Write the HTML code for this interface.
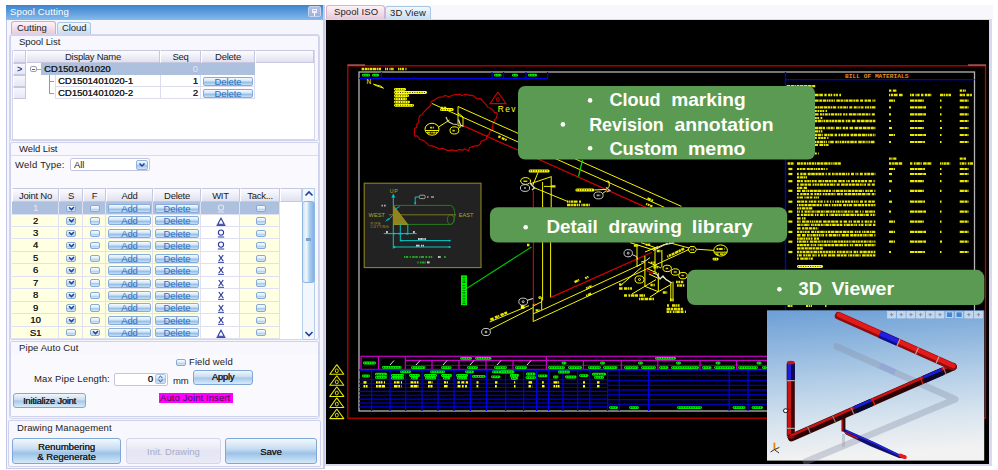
<!DOCTYPE html>
<html>
<head>
<meta charset="utf-8">
<title>Spool Cutting</title>
<style>
html,body{margin:0;padding:0;background:#fff;}
body{width:998px;height:470px;position:relative;overflow:hidden;font-family:"Liberation Sans",sans-serif;font-size:9.5px;color:#222;}
.a{position:absolute;box-sizing:border-box;}
.t{position:absolute;white-space:nowrap;line-height:12px;letter-spacing:-0.05px;}
.grp{background:#f7f7fd;border:1px solid #cfd2ec;border-radius:2px;}
.hdr{background:linear-gradient(#fcfcfe,#eeeef8 50%,#e0e1f0);border:1px solid #c6c8e0;border-left-color:#fff;}
.hc{text-align:center;line-height:12px;white-space:nowrap;letter-spacing:-0.25px;}
.btn{border:1px solid #7fa8d8;border-radius:3px;background:linear-gradient(#f2f7fd,#c4dbf0 48%,#a3c7e8 52%,#d9eaf8);text-align:center;}
.sb{border:1px solid #86acd9;border-radius:2px;background:linear-gradient(#f6fafe,#d2e4f5 45%,#8fbce6 58%,#c8dff5);color:#2d6fc0;font-size:9.5px;line-height:8px;text-align:center;letter-spacing:-0.1px;overflow:hidden;}
.cb{width:9px;height:8px;border:1px solid #86aad6;border-radius:2px;background:linear-gradient(#fafdff,#d8e8f7 50%,#a6c8ea 55%,#d8e9f8);}
.yl{background:#ffffe1;}
.wh{background:#fff;}
.sel{background:#adc1de;}
</style>
</head>
<body>
<!-- LEFT PANEL -->
<div class="a " style="left:6px;top:5px;width:319.2px;height:463.5px;background:#f5f5fb;border:1px solid #c6caea;border-left:1.5px solid #c2c7ea;border-right:2px solid #c8cce9;border-top:none;"></div>
<div class="a " style="left:6px;top:5px;width:317.4px;height:14.6px;background:linear-gradient(#3a84ce,#5b9cdb 45%,#86baeb);"></div>
<div class="t " style="left:10px;top:6px;color:#fff;letter-spacing:0.15px;">Spool Cutting</div>
<div class="a " style="left:308.4px;top:6.4px;width:12.4px;height:11px;border:1px solid #c9d4ee;background:linear-gradient(#b0c1e8,#9db1df);border-radius:1.5px;"></div>
<div class="a " style="left:312px;top:8.6px;width:5px;height:4.4px;border:1px solid #eef2fa;border-bottom-width:2px;"></div>
<div class="a " style="left:314px;top:13px;width:1px;height:3px;background:#fff;"></div>
<div class="a " style="left:11px;top:21px;width:45px;height:14px;border:1px solid #d4aac6;border-bottom:none;border-radius:3px 3px 0 0;background:linear-gradient(#fcf3f8,#e6c8dc);"></div>
<div class="t " style="left:17px;top:22px;">Cutting</div>
<div class="a " style="left:57px;top:22px;width:34px;height:12px;border:1px solid #a9c6e4;border-bottom:none;border-radius:3px 3px 0 0;background:linear-gradient(#f2f8fd,#c6ddf2);"></div>
<div class="t " style="left:62px;top:22px;">Cloud</div>
<div class="a " style="left:8.5px;top:33.5px;width:311px;height:385px;border:1.5px solid #d3d6ec;border-radius:3px;background:#f4f4fb;"></div>
<div class="a grp" style="left:10px;top:35px;width:309px;height:106px;"></div>
<div class="t " style="left:19px;top:36px;">Spool List</div>
<div class="a wh" style="left:12px;top:50px;width:303px;height:90px;border:1px solid #d4d6ec;"></div>
<div class="a hdr" style="left:13px;top:50px;width:13px;height:13px;"></div>
<div class="a hdr" style="left:26px;top:50px;width:134px;height:13px;"><div class="hc">Display Name</div></div>
<div class="a hdr" style="left:160px;top:50px;width:41px;height:13px;"><div class="hc">Seq</div></div>
<div class="a hdr" style="left:201px;top:50px;width:54px;height:13px;"><div class="hc">Delete</div></div>
<div class="a hdr" style="left:255px;top:50px;width:59px;height:13px;"></div>
<div class="a hdr" style="left:13px;top:63px;width:13px;height:12px;background:linear-gradient(#f6f6fc,#e6e7f4);"></div>
<div class="a hdr" style="left:13px;top:75px;width:13px;height:12px;background:linear-gradient(#f6f6fc,#e6e7f4);"></div>
<div class="a hdr" style="left:13px;top:87px;width:13px;height:12px;background:linear-gradient(#f6f6fc,#e6e7f4);"></div>
<div class="t " style="left:17px;top:63px;color:#2a3f8f;font-weight:bold;font-size:9px;">&gt;</div>
<div class="a sel" style="left:41px;top:63px;width:214px;height:12px;"></div>
<div class="a " style="left:30px;top:66px;width:7px;height:6px;border:1px solid #9a9cb8;border-radius:2px;background:#fff;"></div>
<div class="a " style="left:32px;top:68.5px;width:3px;height:1px;background:#666;"></div>
<div class="a " style="left:37px;top:69px;width:4px;height:1px;background:#aaa;"></div>
<div class="t " style="left:44px;top:63px;text-shadow:0.25px 0 0 #222;letter-spacing:0;">CD1501401020</div>
<div class="t " style="left:160px;top:63px;width:38px;text-align:right;color:#dfe6f3;">0</div>
<div class="a wh" style="left:55px;top:75px;width:200px;height:12px;border:1px solid #dcdcf0;border-top:none;"></div>
<div class="a " style="left:160px;top:75px;width:1px;height:12px;background:#dcdcf0;"></div>
<div class="a " style="left:200px;top:75px;width:1px;height:12px;background:#dcdcf0;"></div>
<div class="t " style="left:58px;top:75px;text-shadow:0.25px 0 0 #222;letter-spacing:0;">CD1501401020-1</div>
<div class="t " style="left:160px;top:75px;width:38px;text-align:right;text-shadow:0.25px 0 0 #222;">1</div>
<div class="a sb" style="left:203px;top:77px;width:50px;height:9px;">Delete</div>
<div class="a " style="left:50px;top:81px;width:4px;height:1px;background:#999;"></div>
<div class="a wh" style="left:55px;top:87px;width:200px;height:12px;border:1px solid #dcdcf0;border-top:none;"></div>
<div class="a " style="left:160px;top:87px;width:1px;height:12px;background:#dcdcf0;"></div>
<div class="a " style="left:200px;top:87px;width:1px;height:12px;background:#dcdcf0;"></div>
<div class="t " style="left:58px;top:87px;text-shadow:0.25px 0 0 #222;letter-spacing:0;">CD1501401020-2</div>
<div class="t " style="left:160px;top:87px;width:38px;text-align:right;text-shadow:0.25px 0 0 #222;">2</div>
<div class="a sb" style="left:203px;top:89px;width:50px;height:9px;">Delete</div>
<div class="a " style="left:50px;top:93px;width:4px;height:1px;background:#999;"></div>
<div class="a " style="left:49px;top:75px;width:1px;height:19px;background:#999;"></div>
<div class="a grp" style="left:10px;top:142px;width:309px;height:198px;"></div>
<div class="t " style="left:19px;top:143px;">Weld List</div>
<div class="a " style="left:11px;top:155px;width:307px;height:33px;background:#f9f9fe;border-top:1px solid #d9dbf0;"></div>
<div class="t " style="left:15px;top:159px;letter-spacing:0.25px;">Weld Type:</div>
<div class="a wh" style="left:70px;top:158px;width:80px;height:13px;border:1px solid #c3c6e2;border-radius:2px;"></div>
<div class="t " style="left:74px;top:159px;">All</div>
<div class="a " style="left:136px;top:160px;width:12px;height:10px;border:1px solid #8db3de;border-radius:2px;background:linear-gradient(#f4f9fe,#cfe2f4 45%,#9cc3e8 55%,#d4e6f7);"></div>
<svg class="a" style="left:138px;top:162px;" width="8" height="6"><path d="M1.5 1.5 L4 4 L6.5 1.5" stroke="#1f3f9a" stroke-width="1.5" fill="none"/></svg>
<div class="a wh" style="left:12px;top:188px;width:303px;height:152px;border:1px solid #d4d6ec;"></div>
<div class="a hdr" style="left:12px;top:188px;width:47px;height:14px;"><div class="hc" style="line-height:13px;">Joint No</div></div>
<div class="a hdr" style="left:59px;top:188px;width:24px;height:14px;"><div class="hc" style="line-height:13px;">S</div></div>
<div class="a hdr" style="left:83px;top:188px;width:23px;height:14px;"><div class="hc" style="line-height:13px;">F</div></div>
<div class="a hdr" style="left:106px;top:188px;width:47px;height:14px;"><div class="hc" style="line-height:13px;">Add</div></div>
<div class="a hdr" style="left:153px;top:188px;width:48px;height:14px;"><div class="hc" style="line-height:13px;">Delete</div></div>
<div class="a hdr" style="left:201px;top:188px;width:39px;height:14px;"><div class="hc" style="line-height:13px;">WIT</div></div>
<div class="a hdr" style="left:240px;top:188px;width:40px;height:14px;"><div class="hc" style="line-height:13px;">Tack...</div></div>
<div class="a hdr" style="left:280px;top:188px;width:22px;height:14px;"></div>
<div class="a sel" style="left:12px;top:202.2px;width:268px;height:12.43px;"></div>
<div class="a " style="left:12px;top:213.63px;width:268px;height:1px;background:#dfe0f2;"></div>
<div class="t " style="left:12px;top:202.2px;width:47px;text-align:center;color:#e6ecf6;">1</div>
<div class="a cb" style="left:66px;top:204.8px;width:10px;height:7.4px;width:10px;height:7.4px;"></div>
<svg class="a" style="left:67.5px;top:205.8px;" width="7" height="6"><path d="M1 1.2 L3.5 3.6 L6 1" stroke="#1f3f9a" stroke-width="1.5" fill="none"/></svg>
<div class="a cb" style="left:90px;top:204.8px;width:10px;height:7.4px;width:10px;height:7.4px;"></div>
<div class="a cb" style="left:256px;top:204.8px;width:10px;height:7.4px;width:10px;height:7.4px;"></div>
<div class="a sb" style="left:108px;top:204.0px;width:43px;height:9px;">Add</div>
<div class="a sb" style="left:155px;top:204.0px;width:44px;height:9px;">Delete</div>
<svg class="a" style="left:215.5px;top:203.2px;" width="10" height="11"><circle cx="5" cy="4.6" r="2.6" stroke="#dfe7f5" stroke-width="1.1" fill="none"/><path d="M1.8 9 H8.2" stroke="#dfe7f5" stroke-width="1"/></svg>
<div class="a yl" style="left:12px;top:214.63px;width:189px;height:12.43px;"></div>
<div class="a yl" style="left:240px;top:214.63px;width:40px;height:12.43px;"></div>
<div class="a " style="left:12px;top:226.06px;width:268px;height:1px;background:#dfe0f2;"></div>
<div class="t " style="left:12px;top:214.63px;width:47px;text-align:center;text-shadow:0.2px 0 0 #222;">2</div>
<div class="a cb" style="left:66px;top:217.23px;width:10px;height:7.4px;width:10px;height:7.4px;"></div>
<svg class="a" style="left:67.5px;top:218.23px;" width="7" height="6"><path d="M1 1.2 L3.5 3.6 L6 1" stroke="#1f3f9a" stroke-width="1.5" fill="none"/></svg>
<div class="a cb" style="left:90px;top:217.23px;width:10px;height:7.4px;width:10px;height:7.4px;"></div>
<div class="a cb" style="left:256px;top:217.23px;width:10px;height:7.4px;width:10px;height:7.4px;"></div>
<div class="a sb" style="left:108px;top:216.43px;width:43px;height:9px;">Add</div>
<div class="a sb" style="left:155px;top:216.43px;width:44px;height:9px;">Delete</div>
<svg class="a" style="left:214.5px;top:215.63px;" width="12" height="11"><path d="M6 2.2 L9.2 8.3 H2.8 Z" stroke="#2a3aa0" stroke-width="1.1" fill="none"/><path d="M1.5 9.3 H10.5" stroke="#2a3aa0" stroke-width="1.2"/></svg>
<div class="a yl" style="left:12px;top:227.06px;width:189px;height:12.43px;"></div>
<div class="a yl" style="left:240px;top:227.06px;width:40px;height:12.43px;"></div>
<div class="a " style="left:12px;top:238.49px;width:268px;height:1px;background:#dfe0f2;"></div>
<div class="t " style="left:12px;top:227.06px;width:47px;text-align:center;text-shadow:0.2px 0 0 #222;">3</div>
<div class="a cb" style="left:66px;top:229.66px;width:10px;height:7.4px;width:10px;height:7.4px;"></div>
<svg class="a" style="left:67.5px;top:230.66px;" width="7" height="6"><path d="M1 1.2 L3.5 3.6 L6 1" stroke="#1f3f9a" stroke-width="1.5" fill="none"/></svg>
<div class="a cb" style="left:90px;top:229.66px;width:10px;height:7.4px;width:10px;height:7.4px;"></div>
<div class="a cb" style="left:256px;top:229.66px;width:10px;height:7.4px;width:10px;height:7.4px;"></div>
<div class="a sb" style="left:108px;top:228.86px;width:43px;height:9px;">Add</div>
<div class="a sb" style="left:155px;top:228.86px;width:44px;height:9px;">Delete</div>
<svg class="a" style="left:215.5px;top:228.06px;" width="10" height="11"><circle cx="5" cy="4.6" r="2.6" stroke="#2a3aa0" stroke-width="1.1" fill="none"/><path d="M1.8 9 H8.2" stroke="#2a3aa0" stroke-width="1"/></svg>
<div class="a yl" style="left:12px;top:239.49px;width:189px;height:12.43px;"></div>
<div class="a yl" style="left:240px;top:239.49px;width:40px;height:12.43px;"></div>
<div class="a " style="left:12px;top:250.92px;width:268px;height:1px;background:#dfe0f2;"></div>
<div class="t " style="left:12px;top:239.49px;width:47px;text-align:center;text-shadow:0.2px 0 0 #222;">4</div>
<div class="a cb" style="left:66px;top:242.09px;width:10px;height:7.4px;width:10px;height:7.4px;"></div>
<svg class="a" style="left:67.5px;top:243.09px;" width="7" height="6"><path d="M1 1.2 L3.5 3.6 L6 1" stroke="#1f3f9a" stroke-width="1.5" fill="none"/></svg>
<div class="a cb" style="left:90px;top:242.09px;width:10px;height:7.4px;width:10px;height:7.4px;"></div>
<div class="a cb" style="left:256px;top:242.09px;width:10px;height:7.4px;width:10px;height:7.4px;"></div>
<div class="a sb" style="left:108px;top:241.29px;width:43px;height:9px;">Add</div>
<div class="a sb" style="left:155px;top:241.29px;width:44px;height:9px;">Delete</div>
<svg class="a" style="left:215.5px;top:240.49px;" width="10" height="11"><circle cx="5" cy="4.6" r="2.6" stroke="#2a3aa0" stroke-width="1.1" fill="none"/><path d="M1.8 9 H8.2" stroke="#2a3aa0" stroke-width="1"/></svg>
<div class="a yl" style="left:12px;top:251.92px;width:189px;height:12.43px;"></div>
<div class="a yl" style="left:240px;top:251.92px;width:40px;height:12.43px;"></div>
<div class="a " style="left:12px;top:263.35px;width:268px;height:1px;background:#dfe0f2;"></div>
<div class="t " style="left:12px;top:251.92px;width:47px;text-align:center;text-shadow:0.2px 0 0 #222;">5</div>
<div class="a cb" style="left:66px;top:254.52px;width:10px;height:7.4px;width:10px;height:7.4px;"></div>
<svg class="a" style="left:67.5px;top:255.52px;" width="7" height="6"><path d="M1 1.2 L3.5 3.6 L6 1" stroke="#1f3f9a" stroke-width="1.5" fill="none"/></svg>
<div class="a cb" style="left:90px;top:254.52px;width:10px;height:7.4px;width:10px;height:7.4px;"></div>
<div class="a cb" style="left:256px;top:254.52px;width:10px;height:7.4px;width:10px;height:7.4px;"></div>
<div class="a sb" style="left:108px;top:253.72px;width:43px;height:9px;">Add</div>
<div class="a sb" style="left:155px;top:253.72px;width:44px;height:9px;">Delete</div>
<svg class="a" style="left:215.5px;top:252.92px;" width="10" height="11"><path d="M2.8 2 L7.2 8 M7.2 2 L2.8 8" stroke="#2a3aa0" stroke-width="1.2" fill="none"/><path d="M2 9.3 H8" stroke="#2a3aa0" stroke-width="1"/></svg>
<div class="a yl" style="left:12px;top:264.35px;width:189px;height:12.43px;"></div>
<div class="a yl" style="left:240px;top:264.35px;width:40px;height:12.43px;"></div>
<div class="a " style="left:12px;top:275.78px;width:268px;height:1px;background:#dfe0f2;"></div>
<div class="t " style="left:12px;top:264.35px;width:47px;text-align:center;text-shadow:0.2px 0 0 #222;">6</div>
<div class="a cb" style="left:66px;top:266.95px;width:10px;height:7.4px;width:10px;height:7.4px;"></div>
<svg class="a" style="left:67.5px;top:267.95px;" width="7" height="6"><path d="M1 1.2 L3.5 3.6 L6 1" stroke="#1f3f9a" stroke-width="1.5" fill="none"/></svg>
<div class="a cb" style="left:90px;top:266.95px;width:10px;height:7.4px;width:10px;height:7.4px;"></div>
<div class="a cb" style="left:256px;top:266.95px;width:10px;height:7.4px;width:10px;height:7.4px;"></div>
<div class="a sb" style="left:108px;top:266.15px;width:43px;height:9px;">Add</div>
<div class="a sb" style="left:155px;top:266.15px;width:44px;height:9px;">Delete</div>
<svg class="a" style="left:215.5px;top:265.35px;" width="10" height="11"><path d="M2.8 2 L7.2 8 M7.2 2 L2.8 8" stroke="#2a3aa0" stroke-width="1.2" fill="none"/><path d="M2 9.3 H8" stroke="#2a3aa0" stroke-width="1"/></svg>
<div class="a yl" style="left:12px;top:276.78px;width:189px;height:12.43px;"></div>
<div class="a yl" style="left:240px;top:276.78px;width:40px;height:12.43px;"></div>
<div class="a " style="left:12px;top:288.21px;width:268px;height:1px;background:#dfe0f2;"></div>
<div class="t " style="left:12px;top:276.78px;width:47px;text-align:center;text-shadow:0.2px 0 0 #222;">7</div>
<div class="a cb" style="left:66px;top:279.38px;width:10px;height:7.4px;width:10px;height:7.4px;"></div>
<svg class="a" style="left:67.5px;top:280.38px;" width="7" height="6"><path d="M1 1.2 L3.5 3.6 L6 1" stroke="#1f3f9a" stroke-width="1.5" fill="none"/></svg>
<div class="a cb" style="left:90px;top:279.38px;width:10px;height:7.4px;width:10px;height:7.4px;"></div>
<div class="a cb" style="left:256px;top:279.38px;width:10px;height:7.4px;width:10px;height:7.4px;"></div>
<div class="a sb" style="left:108px;top:278.58px;width:43px;height:9px;">Add</div>
<div class="a sb" style="left:155px;top:278.58px;width:44px;height:9px;">Delete</div>
<svg class="a" style="left:215.5px;top:277.78px;" width="10" height="11"><path d="M2.8 2 L7.2 8 M7.2 2 L2.8 8" stroke="#2a3aa0" stroke-width="1.2" fill="none"/><path d="M2 9.3 H8" stroke="#2a3aa0" stroke-width="1"/></svg>
<div class="a yl" style="left:12px;top:289.21px;width:189px;height:12.43px;"></div>
<div class="a yl" style="left:240px;top:289.21px;width:40px;height:12.43px;"></div>
<div class="a " style="left:12px;top:300.64px;width:268px;height:1px;background:#dfe0f2;"></div>
<div class="t " style="left:12px;top:289.21px;width:47px;text-align:center;text-shadow:0.2px 0 0 #222;">8</div>
<div class="a cb" style="left:66px;top:291.81px;width:10px;height:7.4px;width:10px;height:7.4px;"></div>
<svg class="a" style="left:67.5px;top:292.81px;" width="7" height="6"><path d="M1 1.2 L3.5 3.6 L6 1" stroke="#1f3f9a" stroke-width="1.5" fill="none"/></svg>
<div class="a cb" style="left:90px;top:291.81px;width:10px;height:7.4px;width:10px;height:7.4px;"></div>
<div class="a cb" style="left:256px;top:291.81px;width:10px;height:7.4px;width:10px;height:7.4px;"></div>
<div class="a sb" style="left:108px;top:291.01px;width:43px;height:9px;">Add</div>
<div class="a sb" style="left:155px;top:291.01px;width:44px;height:9px;">Delete</div>
<svg class="a" style="left:215.5px;top:290.21px;" width="10" height="11"><path d="M2.8 2 L7.2 8 M7.2 2 L2.8 8" stroke="#2a3aa0" stroke-width="1.2" fill="none"/><path d="M2 9.3 H8" stroke="#2a3aa0" stroke-width="1"/></svg>
<div class="a yl" style="left:12px;top:301.64px;width:189px;height:12.43px;"></div>
<div class="a yl" style="left:240px;top:301.64px;width:40px;height:12.43px;"></div>
<div class="a " style="left:12px;top:313.07px;width:268px;height:1px;background:#dfe0f2;"></div>
<div class="t " style="left:12px;top:301.64px;width:47px;text-align:center;text-shadow:0.2px 0 0 #222;">9</div>
<div class="a cb" style="left:66px;top:304.24px;width:10px;height:7.4px;width:10px;height:7.4px;"></div>
<svg class="a" style="left:67.5px;top:305.24px;" width="7" height="6"><path d="M1 1.2 L3.5 3.6 L6 1" stroke="#1f3f9a" stroke-width="1.5" fill="none"/></svg>
<div class="a cb" style="left:90px;top:304.24px;width:10px;height:7.4px;width:10px;height:7.4px;"></div>
<div class="a cb" style="left:256px;top:304.24px;width:10px;height:7.4px;width:10px;height:7.4px;"></div>
<div class="a sb" style="left:108px;top:303.44px;width:43px;height:9px;">Add</div>
<div class="a sb" style="left:155px;top:303.44px;width:44px;height:9px;">Delete</div>
<svg class="a" style="left:215.5px;top:302.64px;" width="10" height="11"><path d="M2.8 2 L7.2 8 M7.2 2 L2.8 8" stroke="#2a3aa0" stroke-width="1.2" fill="none"/><path d="M2 9.3 H8" stroke="#2a3aa0" stroke-width="1"/></svg>
<div class="a yl" style="left:12px;top:314.07px;width:189px;height:12.43px;"></div>
<div class="a yl" style="left:240px;top:314.07px;width:40px;height:12.43px;"></div>
<div class="a " style="left:12px;top:325.5px;width:268px;height:1px;background:#dfe0f2;"></div>
<div class="t " style="left:12px;top:314.07px;width:47px;text-align:center;text-shadow:0.2px 0 0 #222;">10</div>
<div class="a cb" style="left:66px;top:316.67px;width:10px;height:7.4px;width:10px;height:7.4px;"></div>
<svg class="a" style="left:67.5px;top:317.67px;" width="7" height="6"><path d="M1 1.2 L3.5 3.6 L6 1" stroke="#1f3f9a" stroke-width="1.5" fill="none"/></svg>
<div class="a cb" style="left:90px;top:316.67px;width:10px;height:7.4px;width:10px;height:7.4px;"></div>
<div class="a cb" style="left:256px;top:316.67px;width:10px;height:7.4px;width:10px;height:7.4px;"></div>
<div class="a sb" style="left:108px;top:315.87px;width:43px;height:9px;">Add</div>
<div class="a sb" style="left:155px;top:315.87px;width:44px;height:9px;">Delete</div>
<svg class="a" style="left:215.5px;top:315.07px;" width="10" height="11"><path d="M2.8 2 L7.2 8 M7.2 2 L2.8 8" stroke="#2a3aa0" stroke-width="1.2" fill="none"/><path d="M2 9.3 H8" stroke="#2a3aa0" stroke-width="1"/></svg>
<div class="a yl" style="left:12px;top:326.5px;width:189px;height:12.43px;"></div>
<div class="a yl" style="left:240px;top:326.5px;width:40px;height:12.43px;"></div>
<div class="a " style="left:12px;top:337.93px;width:268px;height:1px;background:#dfe0f2;"></div>
<div class="t " style="left:12px;top:326.5px;width:47px;text-align:center;text-shadow:0.2px 0 0 #222;">S1</div>
<div class="a cb" style="left:66px;top:329.1px;width:10px;height:7.4px;width:10px;height:7.4px;"></div>
<div class="a cb" style="left:90px;top:329.1px;width:10px;height:7.4px;width:10px;height:7.4px;"></div>
<svg class="a" style="left:91.5px;top:330.1px;" width="7" height="6"><path d="M1 1.2 L3.5 3.6 L6 1" stroke="#1f3f9a" stroke-width="1.5" fill="none"/></svg>
<div class="a cb" style="left:256px;top:329.1px;width:10px;height:7.4px;width:10px;height:7.4px;"></div>
<div class="a sb" style="left:108px;top:328.3px;width:43px;height:9px;">Add</div>
<div class="a sb" style="left:155px;top:328.3px;width:44px;height:9px;">Delete</div>
<svg class="a" style="left:214.5px;top:327.5px;" width="12" height="11"><path d="M6 2.2 L9.2 8.3 H2.8 Z" stroke="#2a3aa0" stroke-width="1.1" fill="none"/><path d="M1.5 9.3 H10.5" stroke="#2a3aa0" stroke-width="1.2"/></svg>
<div class="a " style="left:58px;top:202px;width:1px;height:137px;background:#dfe0f2;"></div>
<div class="a " style="left:82px;top:202px;width:1px;height:137px;background:#dfe0f2;"></div>
<div class="a " style="left:105px;top:202px;width:1px;height:137px;background:#dfe0f2;"></div>
<div class="a " style="left:152px;top:202px;width:1px;height:137px;background:#dfe0f2;"></div>
<div class="a " style="left:200px;top:202px;width:1px;height:137px;background:#dfe0f2;"></div>
<div class="a " style="left:239px;top:202px;width:1px;height:137px;background:#dfe0f2;"></div>
<div class="a " style="left:279px;top:202px;width:1px;height:137px;background:#dfe0f2;"></div>
<div class="a " style="left:302px;top:188px;width:13px;height:152px;background:#f2f7fd;border:1px solid #b5cfea;border-radius:2px;"></div>
<div class="a " style="left:302px;top:201px;width:13px;height:82px;border:1px solid #8db6e2;border-radius:3px;background:linear-gradient(90deg,#cfe3f6,#f2f8fe 30%,#a9cdee 60%,#7fb2e4);"></div>
<div class="a " style="left:306px;top:238px;width:5px;height:3px;background:#7c9fd0;"></div>
<svg class="a" style="left:304px;top:190px;" width="10" height="8"><path d="M1.5 5.5 L5 2 L8.5 5.5" stroke="#1f3f9a" stroke-width="1.6" fill="none"/></svg>
<svg class="a" style="left:304px;top:330px;" width="10" height="8"><path d="M1.5 2 L5 5.5 L8.5 2" stroke="#1f3f9a" stroke-width="1.6" fill="none"/></svg>
<div class="a grp" style="left:10px;top:341px;width:309px;height:76px;"></div>
<div class="t " style="left:19px;top:342px;letter-spacing:0.1px;">Pipe Auto Cut</div>
<div class="a " style="left:11px;top:354px;width:307px;height:62px;background:#f9f9fe;"></div>
<div class="a cb" style="left:176px;top:359px;width:10px;height:7.4px;width:10px;height:7.4px;"></div>
<div class="t " style="left:189px;top:356px;letter-spacing:0.1px;">Field weld</div>
<div class="t " style="left:34px;top:373px;letter-spacing:0.12px;">Max Pipe Length:</div>
<div class="a wh" style="left:114px;top:372.5px;width:54px;height:13px;border:1px solid #c3c6e2;border-radius:2px;"></div>
<div class="t " style="left:114px;top:373px;width:39px;text-align:right;text-shadow:0.35px 0 0 #222;">0</div>
<div class="a " style="left:155px;top:374px;width:11px;height:10px;border:1px solid #a9c5e6;border-radius:2px;background:linear-gradient(#f4f9fe,#cfe2f4 45%,#a9cbec 55%,#d4e6f7);"></div>
<svg class="a" style="left:157px;top:375px;" width="7" height="8"><path d="M1.5 3 L3.5 1.2 L5.5 3 M1.5 5 L3.5 6.8 L5.5 5" stroke="#1f3f9a" stroke-width="1" fill="none"/></svg>
<div class="t " style="left:173px;top:375px;">mm</div>
<div class="a btn" style="left:193px;top:370px;width:60px;height:15px;"><div class="hc" style="line-height:12px;text-shadow:0.2px 0 0 #222;">Apply</div></div>
<div class="a btn" style="left:13px;top:393px;width:73px;height:15px;"><div class="hc" style="line-height:13px;text-shadow:0.2px 0 0 #222;">Initialize Joint</div></div>
<div class="a " style="left:159px;top:393px;width:74px;height:9.5px;background:#ff00ff;"></div>
<div class="t " style="left:160px;top:391.5px;color:#3c0840;letter-spacing:0.1px;">Auto Joint Insert</div>
<div class="a " style="left:8px;top:420px;width:313px;height:47px;border:1px solid #cfd2ec;background:#f7f7fd;border-radius:2px;"></div>
<div class="t " style="left:17px;top:421.5px;letter-spacing:0.1px;">Drawing Management</div>
<div class="a " style="left:12px;top:438px;width:109px;height:26px;border:1px solid #7fa8d8;border-radius:3px;background:linear-gradient(#f2f8fd,#c9def2 40%,#9cc3e8 60%,#d5e8f8);text-align:center;"><div style="line-height:10px;padding-top:2.5px;text-shadow:0.2px 0 0 #222;">Renumbering<br>&amp; Regenerate</div></div>
<div class="a " style="left:126px;top:438px;width:95px;height:26px;border:1px solid #d3d6ea;border-radius:3px;background:linear-gradient(#f7f7fc,#e4e6f3 50%,#e9eaf6);text-align:center;"><div style="line-height:25px;color:#a6acc8;">Init. Drawing</div></div>
<div class="a " style="left:225px;top:438px;width:92px;height:26px;border:1px solid #7fa8d8;border-radius:3px;background:linear-gradient(#f2f8fd,#c9def2 40%,#9cc3e8 60%,#d5e8f8);text-align:center;"><div style="line-height:25px;text-shadow:0.2px 0 0 #222;">Save</div></div>
<div class="a" style="left:326px;top:5px;width:667px;height:15px;background:#f8f8fc;"></div>
<div class="a" style="left:326px;top:5px;width:59px;height:15px;border:1px solid #d8b4cc;border-bottom:none;border-radius:3px 3px 0 0;background:linear-gradient(#fcf3f8,#e4c6da);"></div>
<div class="t" style="left:334px;top:6px;letter-spacing:0.1px;">Spool ISO</div>
<div class="a" style="left:385px;top:6px;width:46px;height:13px;border:1px solid #a9c6e4;border-bottom:none;border-radius:3px 3px 0 0;background:linear-gradient(#f2f8fd,#c9dff3);"></div>
<div class="t" style="left:390px;top:6.5px;letter-spacing:0.1px;">3D View</div>
<div class="a" style="left:325px;top:19px;width:667px;height:447px;background:#d9daf0;"></div>
<div class="a" style="left:326px;top:19.5px;width:663px;height:444.5px;background:#000;"></div>
<svg class="a" style="left:326px;top:19px;" width="663" height="445" viewBox="326 19 663 445" fill="none">
<rect x="347.8" y="65.8" width="637.7" height="352.4" stroke="#c40000" stroke-width="1.3"/>
<path d="M347.5 65L365 65" stroke="#e08080" stroke-width="1" />
<path d="M968 65L986 65" stroke="#e08080" stroke-width="1" />
<rect x="359" y="72" width="615.5" height="339" stroke="#b4b4b4" stroke-width="1.3"/>
<path d="M359 78.4L548 78.4" stroke="#0000e6" stroke-width="1.2" />
<path d="M381.4 72L381.4 78.4" stroke="#0000e6" stroke-width="1.2" />
<path d="M492 72L492 78.4" stroke="#0000e6" stroke-width="1.2" />
<path d="M503.6 72L503.6 78.4" stroke="#0000e6" stroke-width="1.2" />
<path d="M526 72L526 78.4" stroke="#0000e6" stroke-width="1.2" />
<path d="M547.6 72L547.6 78.4" stroke="#0000e6" stroke-width="1.2" />
<path d="M363.4 75.2H368.6" stroke="#00f000" stroke-width="2.8" stroke-linecap="round"/><path d="M363.2 75.2H369" stroke="#003000" stroke-width="1.1" stroke-dasharray="0.9 1.5"/>
<path d="M373.4 75.2H377.6" stroke="#00f000" stroke-width="2.8" stroke-linecap="round"/><path d="M373.2 75.2H378" stroke="#003000" stroke-width="1.1" stroke-dasharray="0.9 1.5"/>
<path d="M495.4 75.2H500.1" stroke="#00f000" stroke-width="2.8" stroke-linecap="round"/><path d="M495.2 75.2H500.5" stroke="#003000" stroke-width="1.1" stroke-dasharray="0.9 1.5"/>
<path d="M513.4 75.2H516.6" stroke="#00f000" stroke-width="2.8" stroke-linecap="round"/><path d="M513.2 75.2H517" stroke="#003000" stroke-width="1.1" stroke-dasharray="0.9 1.5"/>
<path d="M529.4 75.2H535.6" stroke="#00f000" stroke-width="2.8" stroke-linecap="round"/><path d="M529.2 75.2H536" stroke="#003000" stroke-width="1.1" stroke-dasharray="0.9 1.5"/>
<path d="M361.6 69H381" stroke="#ffff00" stroke-width="2.4" stroke-dasharray="2.4 0.6 3.0 0.5 1.2 0.5 2.4 0.5 3.6 0.6 1.2 0.5 3.0 1.4" opacity="0.9"/>
<path d="M385 69H394" stroke="#ffff00" stroke-width="2.4" stroke-dasharray="1.2 0.6 1.2 1.4 1.2 0.5 1.8 0.5 3.6 1.4" opacity="0.9"/>
<path d="M398 69H406.5" stroke="#ffff00" stroke-width="2.4" stroke-dasharray="1.2 0.6 1.2 0.6 2.4 1.4 1.8 0.5" opacity="0.9"/>
<path d="M785.5 72L785.5 310" stroke="#0000e6" stroke-width="1.3" />
<path d="M785.5 79.6L974.5 79.6" stroke="#0000e6" stroke-width="1.3" />
<text x="845" y="78" font-family="Liberation Mono,monospace" font-size="5.6" fill="#e88a18" textLength="63.5" lengthAdjust="spacingAndGlyphs" font-weight="bold">BILL OF MATERIALS</text>
<path d="M786.6 86.2H816" stroke="#ffff00" stroke-width="2.2" stroke-dasharray="3.6 0.7 3.6 0.6 1.2 0.6 2.4 0.5 3.6 0.5 3.6 0.5 3.6 0.6 3.0 1.4" opacity="0.9"/>
<path d="M889 90.6H897" stroke="#ffff00" stroke-width="2.2" stroke-dasharray="2.4 1.4 3.6 1.4" opacity="0.9"/>
<path d="M959.7 90.6H966" stroke="#ffff00" stroke-width="2.2" stroke-dasharray="2.4 0.7 1.8 0.6 1.8 0.5" opacity="0.9"/>
<path d="M815 95H841" stroke="#ffff00" stroke-width="2.4" stroke-dasharray="3.6 0.7 3.6 1.4 2.4 1.4 2.4 0.5 1.2 1.4 1.8 0.7 1.8 1.4 3.0 0.5" opacity="0.9"/>
<path d="M889 95H902.7" stroke="#ffff00" stroke-width="2.4" stroke-dasharray="1.2 0.7 2.4 0.7 3.6 1.4 3.6 1.4" opacity="0.9"/>
<path d="M910 95H931.7" stroke="#ffff00" stroke-width="2.4" stroke-dasharray="1.2 0.5 2.4 1.4 1.2 0.5 2.4 1.4 2.4 1.4 2.4 0.5 3.0 0.7 1.8 0.5" opacity="0.9"/>
<path d="M940 95H951" stroke="#ffff00" stroke-width="2.4" stroke-dasharray="3.0 0.5 1.8 0.7 1.8 0.6 3.0 1.4" opacity="0.9"/>
<path d="M959.7 95H973" stroke="#ffff00" stroke-width="2.4" stroke-dasharray="3.0 0.5 1.8 1.4 3.0 0.7 1.8 1.4" opacity="0.9"/>
<path d="M815 100.6H875.4" stroke="#ffff00" stroke-width="2.3" stroke-dasharray="3.6 0.7 3.0 0.7 3.0 0.6 1.8 0.5 1.8 0.6 1.8 0.6 1.2 1.4 3.6 0.6 2.4 0.7 1.2 0.6 3.0 0.7 3.6 0.7 1.8 0.5 3.0 1.4 3.0 1.4 3.0 0.5 3.0 1.4 1.2 0.6 1.2 0.6" opacity="0.9"/>
<path d="M889 100.6H895" stroke="#ffff00" stroke-width="2.2" stroke-dasharray="4.2 0.5 2.6 0.4 5 0.5" opacity="0.92"/>
<path d="M910 100.6H924" stroke="#ffff00" stroke-width="2.2" stroke-dasharray="4.2 0.5 2.6 0.4 5 0.5" opacity="0.92"/>
<path d="M940 100.6H941.5" stroke="#ffff00" stroke-width="2.2" stroke-dasharray="4.2 0.5 2.6 0.4 5 0.5" opacity="0.92"/>
<path d="M959.7 100.6H968.5" stroke="#ffff00" stroke-width="2.2" stroke-dasharray="4.2 0.5 2.6 0.4 5 0.5" opacity="0.92"/>
<path d="M815 107.4H875.4" stroke="#ffff00" stroke-width="2.3" stroke-dasharray="2.4 0.5 1.2 0.5 3.6 0.6 3.6 0.5 2.4 0.5 1.2 0.6 3.6 1.4 1.8 0.7 2.4 0.7 3.0 0.5 1.2 1.4 3.0 1.4 3.0 0.7 1.2 0.6 1.2 0.7 2.4 1.4 1.8 0.5 1.8 0.7 1.8 0.5 3.6 0.7" opacity="0.9"/>
<path d="M889 107.4H891" stroke="#ffff00" stroke-width="2.2" stroke-dasharray="4.2 0.5 2.6 0.4 5 0.5" opacity="0.92"/>
<path d="M910 107.4H926" stroke="#ffff00" stroke-width="2.2" stroke-dasharray="4.2 0.5 2.6 0.4 5 0.5" opacity="0.92"/>
<path d="M940 107.4H941.5" stroke="#ffff00" stroke-width="2.2" stroke-dasharray="4.2 0.5 2.6 0.4 5 0.5" opacity="0.92"/>
<path d="M959.7 107.4H968.5" stroke="#ffff00" stroke-width="2.2" stroke-dasharray="4.2 0.5 2.6 0.4 5 0.5" opacity="0.92"/>
<path d="M815 111H827" stroke="#ffff00" stroke-width="2.2" stroke-dasharray="1.8 0.7 1.8 0.7 1.8 0.6 1.8 1.4 1.8 0.6" opacity="0.9"/>
<path d="M815 114.4H875.4" stroke="#ffff00" stroke-width="2.3" stroke-dasharray="3.6 1.4 2.4 0.5 1.2 0.7 3.0 0.7 1.8 0.7 3.0 0.7 2.4 0.5 1.8 0.5 1.8 1.4 1.8 0.7 1.8 1.4 3.6 0.5 3.0 0.7 1.2 0.5 3.0 0.6 3.0 0.6 3.0 0.7 1.2 1.4 3.0 1.4" opacity="0.9"/>
<path d="M889 114.4H891" stroke="#ffff00" stroke-width="2.2" stroke-dasharray="4.2 0.5 2.6 0.4 5 0.5" opacity="0.92"/>
<path d="M910 114.4H926" stroke="#ffff00" stroke-width="2.2" stroke-dasharray="4.2 0.5 2.6 0.4 5 0.5" opacity="0.92"/>
<path d="M940 114.4H941.5" stroke="#ffff00" stroke-width="2.2" stroke-dasharray="4.2 0.5 2.6 0.4 5 0.5" opacity="0.92"/>
<path d="M959.7 114.4H968.5" stroke="#ffff00" stroke-width="2.2" stroke-dasharray="4.2 0.5 2.6 0.4 5 0.5" opacity="0.92"/>
<path d="M815 118H823" stroke="#ffff00" stroke-width="2.2" stroke-dasharray="1.8 0.5 1.8 1.4 1.8 1.4" opacity="0.9"/>
<path d="M815 121H875.4" stroke="#ffff00" stroke-width="2.3" stroke-dasharray="2.4 0.6 3.6 0.6 1.2 0.5 1.2 0.6 3.0 0.6 1.8 0.5 2.4 0.6 2.4 0.6 3.6 0.7 2.4 1.4 1.8 0.5 2.4 1.4 3.6 1.4 3.6 0.6 3.6 0.6 3.6 0.5 3.0 0.6 3.6 0.5" opacity="0.9"/>
<path d="M889 121H891" stroke="#ffff00" stroke-width="2.2" stroke-dasharray="4.2 0.5 2.6 0.4 5 0.5" opacity="0.92"/>
<path d="M910 121H924" stroke="#ffff00" stroke-width="2.2" stroke-dasharray="4.2 0.5 2.6 0.4 5 0.5" opacity="0.92"/>
<path d="M940 121H941.5" stroke="#ffff00" stroke-width="2.2" stroke-dasharray="4.2 0.5 2.6 0.4 5 0.5" opacity="0.92"/>
<path d="M959.7 121H968.5" stroke="#ffff00" stroke-width="2.2" stroke-dasharray="4.2 0.5 2.6 0.4 5 0.5" opacity="0.92"/>
<path d="M815 128H875.4" stroke="#ffff00" stroke-width="2.3" stroke-dasharray="3.0 0.5 3.6 0.5 2.4 1.4 1.2 0.5 1.8 0.6 2.4 0.5 1.2 1.4 3.6 0.5 1.2 1.4 2.4 0.6 2.4 1.4 3.6 1.4 3.6 0.6 3.6 0.7 3.6 0.6 3.0 0.6 3.0 0.5 3.0 1.4" opacity="0.9"/>
<path d="M889 128H892" stroke="#ffff00" stroke-width="2.2" stroke-dasharray="4.2 0.5 2.6 0.4 5 0.5" opacity="0.92"/>
<path d="M910 128H924" stroke="#ffff00" stroke-width="2.2" stroke-dasharray="4.2 0.5 2.6 0.4 5 0.5" opacity="0.92"/>
<path d="M940 128H942" stroke="#ffff00" stroke-width="2.2" stroke-dasharray="4.2 0.5 2.6 0.4 5 0.5" opacity="0.92"/>
<path d="M959.7 128H968.5" stroke="#ffff00" stroke-width="2.2" stroke-dasharray="4.2 0.5 2.6 0.4 5 0.5" opacity="0.92"/>
<path d="M815 131.4H823" stroke="#ffff00" stroke-width="2.2" stroke-dasharray="3.0 0.5 1.8 0.7 1.2 0.6 2.4 0.6" opacity="0.9"/>
<path d="M815 135H875.4" stroke="#ffff00" stroke-width="2.3" stroke-dasharray="2.4 0.6 3.0 0.6 1.2 1.4 3.0 0.6 1.8 0.6 3.0 1.4 2.4 1.4 1.8 0.7 2.4 0.5 2.4 0.5 2.4 1.4 3.0 0.5 3.0 0.7 3.6 0.7 3.6 0.5 1.2 0.6 1.2 0.5 2.4 0.7 1.2 0.6 2.4 0.6" opacity="0.9"/>
<path d="M889 135H895" stroke="#ffff00" stroke-width="2.2" stroke-dasharray="4.2 0.5 2.6 0.4 5 0.5" opacity="0.92"/>
<path d="M910 135H926" stroke="#ffff00" stroke-width="2.2" stroke-dasharray="4.2 0.5 2.6 0.4 5 0.5" opacity="0.92"/>
<path d="M940 135H941.5" stroke="#ffff00" stroke-width="2.2" stroke-dasharray="4.2 0.5 2.6 0.4 5 0.5" opacity="0.92"/>
<path d="M959.7 135H968.5" stroke="#ffff00" stroke-width="2.2" stroke-dasharray="4.2 0.5 2.6 0.4 5 0.5" opacity="0.92"/>
<path d="M815 138H829" stroke="#ffff00" stroke-width="2.2" stroke-dasharray="1.8 1.4 2.4 0.5 2.4 0.5 1.8 1.4 1.2 0.7" opacity="0.9"/>
<path d="M815 142H875.4" stroke="#ffff00" stroke-width="2.3" stroke-dasharray="1.2 0.5 2.4 0.5 3.6 0.6 1.2 0.7 1.2 1.4 1.2 0.7 3.6 1.4 2.4 0.6 1.2 0.6 1.2 0.6 2.4 0.5 1.8 0.6 2.4 0.7 3.6 0.6 2.4 1.4 3.6 0.6 2.4 0.7 1.2 0.7 1.2 0.5 1.2 0.6 3.6 1.4" opacity="0.9"/>
<path d="M889 142H891" stroke="#ffff00" stroke-width="2.2" stroke-dasharray="4.2 0.5 2.6 0.4 5 0.5" opacity="0.92"/>
<path d="M910 142H925" stroke="#ffff00" stroke-width="2.2" stroke-dasharray="4.2 0.5 2.6 0.4 5 0.5" opacity="0.92"/>
<path d="M940 142H941.5" stroke="#ffff00" stroke-width="2.2" stroke-dasharray="4.2 0.5 2.6 0.4 5 0.5" opacity="0.92"/>
<path d="M959.7 142H968.5" stroke="#ffff00" stroke-width="2.2" stroke-dasharray="4.2 0.5 2.6 0.4 5 0.5" opacity="0.92"/>
<path d="M815 145H829" stroke="#ffff00" stroke-width="2.2" stroke-dasharray="3.0 1.4 3.6 0.7 1.8 0.6 2.4 0.6" opacity="0.9"/>
<path d="M815 153.5H819" stroke="#ffff00" stroke-width="2.2" stroke-dasharray="1.8 1.4 2.4 0.5" opacity="0.9"/>
<path d="M889 158.7H897" stroke="#ffff00" stroke-width="2.2" stroke-dasharray="1.8 0.5 1.2 0.7 3.0 0.6 1.2 0.5" opacity="0.9"/>
<path d="M959.7 158.7H966" stroke="#ffff00" stroke-width="2.2" stroke-dasharray="3.0 0.7 3.6 0.6" opacity="0.9"/>
<path d="M787.6 163.5H794.2" stroke="#ffff00" stroke-width="2.4" stroke-dasharray="2.4 0.5 3.0 0.6 1.8 0.7" opacity="0.9"/>
<path d="M797 163.5H841" stroke="#ffff00" stroke-width="2.4" stroke-dasharray="3.0 0.5 2.4 0.7 2.4 0.7 1.8 0.5 2.4 0.6 2.4 0.6 1.2 0.7 3.0 0.5 3.0 0.7 3.6 0.6 1.8 0.5 1.2 0.7 1.2 0.6 3.0 0.5 3.0 0.5" opacity="0.9"/>
<path d="M889 163.5H902.7" stroke="#ffff00" stroke-width="2.4" stroke-dasharray="2.4 0.7 1.8 0.5 3.6 0.6 3.6 1.4" opacity="0.9"/>
<path d="M910 163.5H931.7" stroke="#ffff00" stroke-width="2.4" stroke-dasharray="2.4 1.4 1.8 0.7 3.6 0.6 1.2 1.4 3.6 0.6 3.6 0.5 3.6 0.6" opacity="0.9"/>
<path d="M940 163.5H951" stroke="#ffff00" stroke-width="2.4" stroke-dasharray="1.2 0.5 1.2 0.6 2.4 0.5 3.0 1.4 3.6 0.5" opacity="0.9"/>
<path d="M959.7 163.5H973" stroke="#ffff00" stroke-width="2.4" stroke-dasharray="1.2 0.6 3.0 0.7 1.2 1.4 1.2 0.5 3.6 0.5" opacity="0.9"/>
<path d="M788.4 169H792.4" stroke="#ffff00" stroke-width="2.2" stroke-dasharray="4.2 0.5 2.6 0.4 5 0.5" opacity="0.92"/>
<path d="M889 169H895" stroke="#ffff00" stroke-width="2.2" stroke-dasharray="4.2 0.5 2.6 0.4 5 0.5" opacity="0.92"/>
<path d="M910 169H925" stroke="#ffff00" stroke-width="2.2" stroke-dasharray="4.2 0.5 2.6 0.4 5 0.5" opacity="0.92"/>
<path d="M940 169H941.5" stroke="#ffff00" stroke-width="2.2" stroke-dasharray="4.2 0.5 2.6 0.4 5 0.5" opacity="0.92"/>
<path d="M959.7 169H968.5" stroke="#ffff00" stroke-width="2.2" stroke-dasharray="4.2 0.5 2.6 0.4 5 0.5" opacity="0.92"/>
<path d="M797 169.0H828" stroke="#ffff00" stroke-width="2.2" stroke-dasharray="2.4 0.6 1.8 0.6 3.0 1.4 3.0 0.5 3.0 0.7 1.2 0.6 1.2 0.6 2.4 0.7 2.4 0.6 1.2 1.4 1.2 1.4" opacity="0.9"/>
<path d="M788.4 174H792.4" stroke="#ffff00" stroke-width="2.2" stroke-dasharray="4.2 0.5 2.6 0.4 5 0.5" opacity="0.92"/>
<path d="M889 174H892" stroke="#ffff00" stroke-width="2.2" stroke-dasharray="4.2 0.5 2.6 0.4 5 0.5" opacity="0.92"/>
<path d="M910 174H926" stroke="#ffff00" stroke-width="2.2" stroke-dasharray="4.2 0.5 2.6 0.4 5 0.5" opacity="0.92"/>
<path d="M940 174H941.5" stroke="#ffff00" stroke-width="2.2" stroke-dasharray="4.2 0.5 2.6 0.4 5 0.5" opacity="0.92"/>
<path d="M959.7 174H968.5" stroke="#ffff00" stroke-width="2.2" stroke-dasharray="4.2 0.5 2.6 0.4 5 0.5" opacity="0.92"/>
<path d="M797 174.0H875.4" stroke="#ffff00" stroke-width="2.3" stroke-dasharray="1.8 1.4 2.4 0.7 3.0 1.4 3.0 0.5 3.6 0.6 2.4 0.5 3.0 0.5 2.4 1.4 1.2 1.4 2.4 1.4 1.8 0.6 1.2 0.5 1.8 0.7 2.4 0.6 3.6 0.7 1.2 0.7 1.8 1.4 3.0 1.4 1.2 0.6 1.2 1.4 3.0 1.4 2.4 0.6 3.0 0.7 3.0 0.7 1.2 0.7" opacity="0.9"/>
<path d="M797 177.35H807" stroke="#ffff00" stroke-width="2.2" stroke-dasharray="2.4 0.7 3.0 0.5 1.8 0.5 2.4 0.7" opacity="0.9"/>
<path d="M788.4 181.2H792.4" stroke="#ffff00" stroke-width="2.2" stroke-dasharray="4.2 0.5 2.6 0.4 5 0.5" opacity="0.92"/>
<path d="M889 181.2H892" stroke="#ffff00" stroke-width="2.2" stroke-dasharray="4.2 0.5 2.6 0.4 5 0.5" opacity="0.92"/>
<path d="M910 181.2H924" stroke="#ffff00" stroke-width="2.2" stroke-dasharray="4.2 0.5 2.6 0.4 5 0.5" opacity="0.92"/>
<path d="M940 181.2H941.5" stroke="#ffff00" stroke-width="2.2" stroke-dasharray="4.2 0.5 2.6 0.4 5 0.5" opacity="0.92"/>
<path d="M959.7 181.2H968.5" stroke="#ffff00" stroke-width="2.2" stroke-dasharray="4.2 0.5 2.6 0.4 5 0.5" opacity="0.92"/>
<path d="M797 181.2H875.4" stroke="#ffff00" stroke-width="2.3" stroke-dasharray="3.0 0.5 2.4 1.4 2.4 0.5 2.4 0.5 1.2 0.7 1.8 0.6 2.4 1.4 3.6 0.7 1.8 0.7 3.0 0.5 3.0 0.6 1.2 0.5 3.0 1.4 3.6 0.6 2.4 1.4 1.2 0.6 1.8 1.4 3.0 0.7 2.4 0.7 2.4 0.7 3.0 0.6 2.4 1.4 3.6 1.4 1.2 0.6 1.8 0.5" opacity="0.9"/>
<path d="M797 184.55H875.4" stroke="#ffff00" stroke-width="2.3" stroke-dasharray="1.8 1.4 3.6 0.6 3.0 0.7 3.0 1.4 1.8 0.6 1.8 0.5 1.8 0.7 3.6 0.5 2.4 0.6 2.4 0.7 3.6 0.6 1.2 1.4 3.0 1.4 3.6 0.6 3.0 0.7 2.4 0.5 3.0 0.7 3.6 0.7 1.8 0.6 1.2 0.7 1.8 1.4 3.0 1.4 3.0 0.7" opacity="0.9"/>
<path d="M797 187.9H807" stroke="#ffff00" stroke-width="2.2" stroke-dasharray="1.8 0.5 3.0 1.4 3.6 1.4" opacity="0.9"/>
<path d="M788.4 190.8H792.4" stroke="#ffff00" stroke-width="2.2" stroke-dasharray="4.2 0.5 2.6 0.4 5 0.5" opacity="0.92"/>
<path d="M889 190.8H891" stroke="#ffff00" stroke-width="2.2" stroke-dasharray="4.2 0.5 2.6 0.4 5 0.5" opacity="0.92"/>
<path d="M910 190.8H924" stroke="#ffff00" stroke-width="2.2" stroke-dasharray="4.2 0.5 2.6 0.4 5 0.5" opacity="0.92"/>
<path d="M940 190.8H941.5" stroke="#ffff00" stroke-width="2.2" stroke-dasharray="4.2 0.5 2.6 0.4 5 0.5" opacity="0.92"/>
<path d="M959.7 190.8H968.5" stroke="#ffff00" stroke-width="2.2" stroke-dasharray="4.2 0.5 2.6 0.4 5 0.5" opacity="0.92"/>
<path d="M797 190.8H875.4" stroke="#ffff00" stroke-width="2.3" stroke-dasharray="3.6 1.4 3.0 0.6 1.2 0.6 1.8 0.6 3.6 0.5 3.0 0.5 3.6 0.5 1.2 0.6 1.8 0.5 2.4 0.6 2.4 1.4 1.2 0.5 1.2 0.7 3.6 0.6 3.0 0.7 1.8 0.5 1.2 0.7 3.0 0.7 2.4 0.6 3.0 0.6 3.6 0.6 1.2 1.4 2.4 0.5 1.2 0.6 3.0 1.4 1.2 0.7" opacity="0.9"/>
<path d="M797 194.15H875.4" stroke="#ffff00" stroke-width="2.3" stroke-dasharray="1.8 1.4 2.4 0.6 3.0 0.5 2.4 1.4 2.4 1.4 1.8 0.5 2.4 0.5 1.8 1.4 1.8 0.7 1.8 0.6 3.0 0.6 2.4 0.7 1.2 1.4 3.6 0.6 1.8 1.4 3.0 0.5 3.6 0.6 3.0 0.5 1.8 0.5 3.6 0.6 3.0 0.5 1.2 0.6 3.0 1.4 2.4 0.5 1.2 0.6" opacity="0.9"/>
<path d="M797 197.5H819" stroke="#ffff00" stroke-width="2.2" stroke-dasharray="1.8 0.6 3.6 1.4 1.2 0.7 3.0 0.7 2.4 1.4 1.8 0.5 1.2 0.5 2.4 0.5" opacity="0.9"/>
<path d="M788.4 201.7H792.4" stroke="#ffff00" stroke-width="2.2" stroke-dasharray="4.2 0.5 2.6 0.4 5 0.5" opacity="0.92"/>
<path d="M889 201.7H892" stroke="#ffff00" stroke-width="2.2" stroke-dasharray="4.2 0.5 2.6 0.4 5 0.5" opacity="0.92"/>
<path d="M910 201.7H925" stroke="#ffff00" stroke-width="2.2" stroke-dasharray="4.2 0.5 2.6 0.4 5 0.5" opacity="0.92"/>
<path d="M940 201.7H941.5" stroke="#ffff00" stroke-width="2.2" stroke-dasharray="4.2 0.5 2.6 0.4 5 0.5" opacity="0.92"/>
<path d="M959.7 201.7H968.5" stroke="#ffff00" stroke-width="2.2" stroke-dasharray="4.2 0.5 2.6 0.4 5 0.5" opacity="0.92"/>
<path d="M797 201.7H875.4" stroke="#ffff00" stroke-width="2.3" stroke-dasharray="3.6 0.6 3.0 0.7 2.4 1.4 1.2 0.5 3.0 0.6 2.4 1.4 1.8 0.7 2.4 1.4 1.2 1.4 1.8 1.4 1.2 1.4 1.2 1.4 1.2 0.5 2.4 0.6 1.2 0.7 2.4 0.7 2.4 0.5 2.4 0.7 2.4 0.7 1.2 0.5 1.2 0.6 1.2 1.4 3.0 1.4 2.4 1.4 3.0 0.6 3.0 0.6" opacity="0.9"/>
<path d="M797 205.05H875.4" stroke="#ffff00" stroke-width="2.3" stroke-dasharray="1.2 0.7 1.8 0.6 2.4 0.7 3.0 0.7 3.6 0.5 3.6 0.6 3.0 0.6 1.8 1.4 1.2 0.5 3.0 0.7 1.8 1.4 1.2 0.5 2.4 0.5 1.8 0.5 3.0 1.4 3.0 0.6 1.8 0.6 3.0 1.4 3.6 0.6 3.6 0.5 2.4 0.7 2.4 0.7 2.4 0.7 2.4 0.6 3.0 0.6" opacity="0.9"/>
<path d="M797 208.4H813" stroke="#ffff00" stroke-width="2.2" stroke-dasharray="1.8 0.6 1.8 0.7 3.6 0.6 2.4 0.5 3.0 0.7 1.8 0.6" opacity="0.9"/>
<path d="M788.4 211.6H792.4" stroke="#ffff00" stroke-width="2.2" stroke-dasharray="4.2 0.5 2.6 0.4 5 0.5" opacity="0.92"/>
<path d="M889 211.6H891" stroke="#ffff00" stroke-width="2.2" stroke-dasharray="4.2 0.5 2.6 0.4 5 0.5" opacity="0.92"/>
<path d="M910 211.6H926" stroke="#ffff00" stroke-width="2.2" stroke-dasharray="4.2 0.5 2.6 0.4 5 0.5" opacity="0.92"/>
<path d="M940 211.6H941.5" stroke="#ffff00" stroke-width="2.2" stroke-dasharray="4.2 0.5 2.6 0.4 5 0.5" opacity="0.92"/>
<path d="M959.7 211.6H968.5" stroke="#ffff00" stroke-width="2.2" stroke-dasharray="4.2 0.5 2.6 0.4 5 0.5" opacity="0.92"/>
<path d="M797 211.6H875.4" stroke="#ffff00" stroke-width="2.3" stroke-dasharray="1.2 0.5 1.2 1.4 1.8 1.4 2.4 0.5 2.4 0.6 1.2 0.5 1.8 0.6 1.2 0.7 3.6 0.6 3.0 0.7 1.2 0.5 3.6 0.7 1.8 0.5 2.4 0.7 1.8 0.5 1.8 0.7 1.2 0.6 1.2 0.7 3.0 0.7 1.8 0.7 1.2 0.6 1.2 1.4 3.6 1.4 1.2 1.4 1.2 1.4 3.6 0.6 3.6 0.5 1.8 1.4" opacity="0.9"/>
<path d="M797 214.95H875.4" stroke="#ffff00" stroke-width="2.3" stroke-dasharray="2.4 1.4 2.4 0.7 3.0 0.5 2.4 0.7 3.0 1.4 1.2 0.7 1.8 1.4 3.0 0.6 1.2 1.4 1.8 1.4 1.2 0.5 3.0 0.7 3.0 0.6 1.8 0.5 1.2 0.6 3.0 0.5 3.6 0.7 3.6 0.6 1.8 0.7 2.4 0.6 3.6 0.6 1.2 0.5 3.0 1.4 1.8 0.7 1.8 0.5 3.0 0.7" opacity="0.9"/>
<path d="M797 218.3H807" stroke="#ffff00" stroke-width="2.2" stroke-dasharray="3.6 1.4 1.2 0.6 1.8 1.4" opacity="0.9"/>
<path d="M788.4 221.6H792.4" stroke="#ffff00" stroke-width="2.2" stroke-dasharray="4.2 0.5 2.6 0.4 5 0.5" opacity="0.92"/>
<path d="M889 221.6H895" stroke="#ffff00" stroke-width="2.2" stroke-dasharray="4.2 0.5 2.6 0.4 5 0.5" opacity="0.92"/>
<path d="M910 221.6H924" stroke="#ffff00" stroke-width="2.2" stroke-dasharray="4.2 0.5 2.6 0.4 5 0.5" opacity="0.92"/>
<path d="M940 221.6H941.5" stroke="#ffff00" stroke-width="2.2" stroke-dasharray="4.2 0.5 2.6 0.4 5 0.5" opacity="0.92"/>
<path d="M959.7 221.6H968.5" stroke="#ffff00" stroke-width="2.2" stroke-dasharray="4.2 0.5 2.6 0.4 5 0.5" opacity="0.92"/>
<path d="M797 221.6H875.4" stroke="#ffff00" stroke-width="2.3" stroke-dasharray="1.8 0.6 1.2 1.4 3.6 0.6 3.0 0.7 1.2 0.6 1.8 0.6 1.2 0.5 2.4 0.5 3.0 1.4 3.6 0.7 3.0 0.7 3.6 0.6 3.0 1.4 2.4 1.4 3.6 1.4 1.8 0.5 1.2 1.4 3.0 0.6 3.0 1.4 1.8 1.4 3.0 0.5 1.2 0.6 2.4 1.4 2.4 0.5" opacity="0.9"/>
<path d="M797 224.95H875.4" stroke="#ffff00" stroke-width="2.3" stroke-dasharray="3.0 0.5 1.2 0.6 1.2 0.7 3.6 0.5 1.2 1.4 1.8 0.5 1.2 0.5 1.8 0.6 3.0 0.7 1.8 0.6 1.2 0.7 3.6 0.7 1.8 0.7 3.6 0.7 3.0 0.6 2.4 1.4 1.8 0.7 3.6 0.6 2.4 0.7 1.2 0.6 1.8 1.4 1.8 0.7 2.4 1.4 1.8 0.7 1.2 0.5 2.4 1.4 3.6 0.5" opacity="0.9"/>
<path d="M797 228.3H819" stroke="#ffff00" stroke-width="2.2" stroke-dasharray="3.6 1.4 2.4 0.7 3.0 0.7 3.6 0.6 2.4 0.7 1.2 1.4 1.8 0.6" opacity="0.9"/>
<path d="M788.4 231.9H792.4" stroke="#ffff00" stroke-width="2.2" stroke-dasharray="4.2 0.5 2.6 0.4 5 0.5" opacity="0.92"/>
<path d="M889 231.9H895" stroke="#ffff00" stroke-width="2.2" stroke-dasharray="4.2 0.5 2.6 0.4 5 0.5" opacity="0.92"/>
<path d="M910 231.9H926" stroke="#ffff00" stroke-width="2.2" stroke-dasharray="4.2 0.5 2.6 0.4 5 0.5" opacity="0.92"/>
<path d="M940 231.9H941.5" stroke="#ffff00" stroke-width="2.2" stroke-dasharray="4.2 0.5 2.6 0.4 5 0.5" opacity="0.92"/>
<path d="M959.7 231.9H968.5" stroke="#ffff00" stroke-width="2.2" stroke-dasharray="4.2 0.5 2.6 0.4 5 0.5" opacity="0.92"/>
<path d="M797 231.9H875.4" stroke="#ffff00" stroke-width="2.3" stroke-dasharray="2.4 0.7 2.4 0.7 1.2 0.5 1.8 0.6 2.4 1.4 3.0 0.7 1.2 0.6 3.0 0.6 3.6 0.5 1.2 0.5 1.2 0.7 2.4 0.5 3.6 0.7 3.6 0.6 3.0 0.7 3.6 0.6 1.8 0.7 3.6 1.4 1.8 0.6 1.2 0.6 1.8 1.4 1.2 0.5 1.8 0.7 3.0 0.7 1.2 0.5 3.6 0.7" opacity="0.9"/>
<path d="M797 235.25H875.4" stroke="#ffff00" stroke-width="2.3" stroke-dasharray="3.6 1.4 3.6 1.4 1.8 0.6 1.2 0.5 1.2 0.5 3.0 0.6 1.8 0.6 1.2 0.5 1.2 0.6 1.8 1.4 1.8 1.4 3.6 0.6 3.6 0.7 1.2 0.7 1.2 1.4 3.6 0.5 3.0 1.4 3.0 0.5 3.0 0.6 1.8 0.5 2.4 0.6 1.2 0.5 2.4 0.7 1.2 0.7 3.6 1.4 3.6 0.7" opacity="0.9"/>
<path d="M797 238.6H819" stroke="#ffff00" stroke-width="2.2" stroke-dasharray="1.8 0.5 3.6 0.5 1.8 0.7 1.8 0.6 1.8 0.7 1.8 1.4 2.4 0.6 3.0 1.4" opacity="0.9"/>
<path d="M788.4 241.7H792.4" stroke="#ffff00" stroke-width="2.2" stroke-dasharray="4.2 0.5 2.6 0.4 5 0.5" opacity="0.92"/>
<path d="M889 241.7H895" stroke="#ffff00" stroke-width="2.2" stroke-dasharray="4.2 0.5 2.6 0.4 5 0.5" opacity="0.92"/>
<path d="M910 241.7H926" stroke="#ffff00" stroke-width="2.2" stroke-dasharray="4.2 0.5 2.6 0.4 5 0.5" opacity="0.92"/>
<path d="M940 241.7H942" stroke="#ffff00" stroke-width="2.2" stroke-dasharray="4.2 0.5 2.6 0.4 5 0.5" opacity="0.92"/>
<path d="M959.7 241.7H968.5" stroke="#ffff00" stroke-width="2.2" stroke-dasharray="4.2 0.5 2.6 0.4 5 0.5" opacity="0.92"/>
<path d="M797 241.7H875.4" stroke="#ffff00" stroke-width="2.3" stroke-dasharray="1.2 0.5 3.0 0.6 3.6 0.7 1.8 1.4 3.6 0.5 3.6 0.6 1.8 0.5 1.2 0.5 1.2 0.6 2.4 0.6 1.2 0.5 1.2 0.6 1.2 0.5 1.2 0.5 3.6 0.7 1.8 0.5 3.0 0.5 1.8 0.6 1.8 0.5 1.2 0.5 1.2 0.7 3.0 0.5 1.8 0.5 1.8 0.7 2.4 0.7 3.0 0.7 1.2 0.7 2.4 0.7 1.2 0.7 2.4 1.4" opacity="0.9"/>
<path d="M797 245.05H875.4" stroke="#ffff00" stroke-width="2.3" stroke-dasharray="2.4 0.5 3.0 0.5 3.0 0.5 2.4 1.4 1.2 0.6 1.2 0.7 1.8 1.4 1.2 0.6 2.4 0.5 1.2 0.7 3.0 0.5 3.0 0.6 3.0 0.7 3.6 0.7 3.6 0.6 2.4 0.6 1.8 1.4 1.8 0.5 1.2 1.4 3.6 0.5 2.4 0.7 1.2 1.4 3.0 0.5 3.0 0.5 2.4 0.6 2.4 0.7" opacity="0.9"/>
<path d="M797 248.4H823" stroke="#ffff00" stroke-width="2.2" stroke-dasharray="3.6 0.6 3.0 0.6 3.0 0.6 3.6 0.5 2.4 0.7 3.6 0.6 3.0 0.7" opacity="0.9"/>
<path d="M788.4 252H792.4" stroke="#ffff00" stroke-width="2.2" stroke-dasharray="4.2 0.5 2.6 0.4 5 0.5" opacity="0.92"/>
<path d="M889 252H891" stroke="#ffff00" stroke-width="2.2" stroke-dasharray="4.2 0.5 2.6 0.4 5 0.5" opacity="0.92"/>
<path d="M910 252H925" stroke="#ffff00" stroke-width="2.2" stroke-dasharray="4.2 0.5 2.6 0.4 5 0.5" opacity="0.92"/>
<path d="M940 252H941.5" stroke="#ffff00" stroke-width="2.2" stroke-dasharray="4.2 0.5 2.6 0.4 5 0.5" opacity="0.92"/>
<path d="M959.7 252H968.5" stroke="#ffff00" stroke-width="2.2" stroke-dasharray="4.2 0.5 2.6 0.4 5 0.5" opacity="0.92"/>
<path d="M797 252.0H875.4" stroke="#ffff00" stroke-width="2.3" stroke-dasharray="2.4 0.6 1.8 0.7 3.0 0.6 3.6 0.6 2.4 0.7 3.6 0.6 1.8 0.6 2.4 0.7 1.8 0.6 2.4 0.6 2.4 0.5 1.8 0.5 1.8 1.4 1.8 0.6 2.4 0.7 3.0 0.7 1.8 0.5 1.2 0.7 1.8 1.4 3.0 0.5 1.2 1.4 3.0 0.6 3.6 0.7 3.0 0.5 1.8 0.7 3.6 1.4" opacity="0.9"/>
<path d="M797 255.35H875.4" stroke="#ffff00" stroke-width="2.3" stroke-dasharray="1.2 0.6 3.0 1.4 1.8 0.6 1.8 0.5 3.0 1.4 2.4 0.7 1.2 1.4 1.8 1.4 1.8 0.7 3.0 1.4 3.0 0.5 3.6 1.4 3.6 0.6 2.4 0.5 3.0 1.4 1.2 0.5 2.4 0.6 1.8 0.6 3.6 0.7 1.2 1.4 3.6 0.6 3.0 0.5 2.4 0.7 3.0 1.4" opacity="0.9"/>
<path d="M797 258.7H813" stroke="#ffff00" stroke-width="2.2" stroke-dasharray="1.8 1.4 3.6 0.5 3.6 0.7 1.2 0.7 2.4 1.4" opacity="0.9"/>
<path d="M798.4 266.5H821.6" stroke="#ffff00" stroke-width="2.8" stroke-linecap="round"/><path d="M798.2 266.5H822" stroke="#303000" stroke-width="1.1" stroke-dasharray="0.9 1.5"/>
<path d="M787.6 306H793" stroke="#ffff00" stroke-width="2" stroke-dasharray="3.0 0.5 1.2 0.5 3.0 1.4" opacity="0.9"/>
<path d="M806 306H812" stroke="#ffff00" stroke-width="2" stroke-dasharray="2.4 0.7 1.2 0.6 2.4 1.4" opacity="0.9"/>
<path d="M825 306H826.5" stroke="#ffff00" stroke-width="2" stroke-dasharray="3.6 0.6" opacity="0.9"/>
<rect x="361" y="356.3" width="613" height="13.1" stroke="#c800c8" stroke-width="1.2"/>
<path d="M378.5 356.3L378.5 369.4" stroke="#c800c8" stroke-width="1.2" />
<path d="M405.3 356.3L405.3 369.4" stroke="#c800c8" stroke-width="1.2" />
<path d="M546.4 356.3L546.4 369.4" stroke="#c800c8" stroke-width="1.2" />
<path d="M405.3 360.4L974 360.4" stroke="#c800c8" stroke-width="1.1" />
<path d="M405.3 365.3L767 365.3" stroke="#8a008a" stroke-width="0.9" />
<path d="M432 360.4L432 369.4" stroke="#c800c8" stroke-width="1.2" />
<path d="M459 360.4L459 369.4" stroke="#c800c8" stroke-width="1.2" />
<path d="M486 360.4L486 369.4" stroke="#c800c8" stroke-width="1.2" />
<path d="M513 360.4L513 369.4" stroke="#c800c8" stroke-width="1.2" />
<path d="M583.4 360.4L583.4 369.4" stroke="#c800c8" stroke-width="1.2" />
<path d="M621.3 360.4L621.3 369.4" stroke="#c800c8" stroke-width="1.2" />
<path d="M657.8 360.4L657.8 369.4" stroke="#c800c8" stroke-width="1.2" />
<path d="M700 360.4L700 369.4" stroke="#c800c8" stroke-width="1.2" />
<path d="M736.6 360.4L736.6 369.4" stroke="#c800c8" stroke-width="1.2" />
<path d="M780 360.4L780 369.4" stroke="#c800c8" stroke-width="1.2" />
<path d="M820 360.4L820 369.4" stroke="#c800c8" stroke-width="1.2" />
<path d="M860 360.4L860 369.4" stroke="#c800c8" stroke-width="1.2" />
<path d="M900 360.4L900 369.4" stroke="#c800c8" stroke-width="1.2" />
<path d="M940 360.4L940 369.4" stroke="#c800c8" stroke-width="1.2" />
<path d="M364.4 363H374.6" stroke="#00f000" stroke-width="2.8" stroke-linecap="round"/><path d="M364.2 363H375" stroke="#003000" stroke-width="1.1" stroke-dasharray="0.9 1.5"/>
<path d="M383.4 367.4H400.1" stroke="#00f000" stroke-width="2.8" stroke-linecap="round"/><path d="M383.2 367.4H400.5" stroke="#003000" stroke-width="1.1" stroke-dasharray="0.9 1.5"/>
<path d="M461.4 358.3H470.6" stroke="#00f000" stroke-width="2.8" stroke-linecap="round"/><path d="M461.2 358.3H471" stroke="#003000" stroke-width="1.1" stroke-dasharray="0.9 1.5"/>
<path d="M476.4 358.3H490.1" stroke="#00f000" stroke-width="2.8" stroke-linecap="round"/><path d="M476.2 358.3H490.5" stroke="#003000" stroke-width="1.1" stroke-dasharray="0.9 1.5"/>
<path d="M656.4 358.3H674.6" stroke="#00f000" stroke-width="2.8" stroke-linecap="round"/><path d="M656.2 358.3H675" stroke="#003000" stroke-width="1.1" stroke-dasharray="0.9 1.5"/>
<path d="M412.4 367.6H424.1" stroke="#00f000" stroke-width="2.8" stroke-linecap="round"/><path d="M412.2 367.6H424.5" stroke="#003000" stroke-width="1.1" stroke-dasharray="0.9 1.5"/>
<path d="M442.4 367.6H450.1" stroke="#00f000" stroke-width="2.8" stroke-linecap="round"/><path d="M442.2 367.6H450.5" stroke="#003000" stroke-width="1.1" stroke-dasharray="0.9 1.5"/>
<path d="M468.4 367.6H476.6" stroke="#00f000" stroke-width="2.8" stroke-linecap="round"/><path d="M468.2 367.6H477" stroke="#003000" stroke-width="1.1" stroke-dasharray="0.9 1.5"/>
<path d="M495.4 367.6H505.6" stroke="#00f000" stroke-width="2.8" stroke-linecap="round"/><path d="M495.2 367.6H506" stroke="#003000" stroke-width="1.1" stroke-dasharray="0.9 1.5"/>
<path d="M516.4 367.6H525.6" stroke="#00f000" stroke-width="2.8" stroke-linecap="round"/><path d="M516.2 367.6H526" stroke="#003000" stroke-width="1.1" stroke-dasharray="0.9 1.5"/>
<path d="M549.4 367.6H563.6" stroke="#00f000" stroke-width="2.8" stroke-linecap="round"/><path d="M549.2 367.6H564" stroke="#003000" stroke-width="1.1" stroke-dasharray="0.9 1.5"/>
<path d="M569.4 367.6H580.6" stroke="#00f000" stroke-width="2.8" stroke-linecap="round"/><path d="M569.2 367.6H581" stroke="#003000" stroke-width="1.1" stroke-dasharray="0.9 1.5"/>
<path d="M589.4 367.6H599.6" stroke="#00f000" stroke-width="2.8" stroke-linecap="round"/><path d="M589.2 367.6H600" stroke="#003000" stroke-width="1.1" stroke-dasharray="0.9 1.5"/>
<path d="M604.4 367.6H616.1" stroke="#00f000" stroke-width="2.8" stroke-linecap="round"/><path d="M604.2 367.6H616.5" stroke="#003000" stroke-width="1.1" stroke-dasharray="0.9 1.5"/>
<path d="M625.4 367.6H637.1" stroke="#00f000" stroke-width="2.8" stroke-linecap="round"/><path d="M625.2 367.6H637.5" stroke="#003000" stroke-width="1.1" stroke-dasharray="0.9 1.5"/>
<path d="M642.4 367.6H654.6" stroke="#00f000" stroke-width="2.8" stroke-linecap="round"/><path d="M642.2 367.6H655" stroke="#003000" stroke-width="1.1" stroke-dasharray="0.9 1.5"/>
<path d="M660.4 367.6H667.1" stroke="#00f000" stroke-width="2.8" stroke-linecap="round"/><path d="M660.2 367.6H667.5" stroke="#003000" stroke-width="1.1" stroke-dasharray="0.9 1.5"/>
<path d="M672.4 367.6H697.6" stroke="#00f000" stroke-width="2.8" stroke-linecap="round"/><path d="M672.2 367.6H698" stroke="#003000" stroke-width="1.1" stroke-dasharray="0.9 1.5"/>
<path d="M703.4 367.6H710.1" stroke="#00f000" stroke-width="2.8" stroke-linecap="round"/><path d="M703.2 367.6H710.5" stroke="#003000" stroke-width="1.1" stroke-dasharray="0.9 1.5"/>
<path d="M715.4 367.6H733.6" stroke="#00f000" stroke-width="2.8" stroke-linecap="round"/><path d="M715.2 367.6H734" stroke="#003000" stroke-width="1.1" stroke-dasharray="0.9 1.5"/>
<path d="M739.4 367.6H756.6" stroke="#00f000" stroke-width="2.8" stroke-linecap="round"/><path d="M739.2 367.6H757" stroke="#003000" stroke-width="1.1" stroke-dasharray="0.9 1.5"/>
<path d="M763.4 367.6H765.6" stroke="#00f000" stroke-width="2.8" stroke-linecap="round"/><path d="M763.2 367.6H766" stroke="#003000" stroke-width="1.1" stroke-dasharray="0.9 1.5"/>
<path d="M562.9 363H565.1" stroke="#00f000" stroke-width="2.8" stroke-linecap="round"/><path d="M562.7 363H565.5" stroke="#003000" stroke-width="1.1" stroke-dasharray="0.9 1.5"/>
<path d="M601.4 363H603.6" stroke="#00f000" stroke-width="2.8" stroke-linecap="round"/><path d="M601.2 363H604.0" stroke="#003000" stroke-width="1.1" stroke-dasharray="0.9 1.5"/>
<path d="M639.4 363H641.6" stroke="#00f000" stroke-width="2.8" stroke-linecap="round"/><path d="M639.2 363H642.0" stroke="#003000" stroke-width="1.1" stroke-dasharray="0.9 1.5"/>
<path d="M677.4 363H679.6" stroke="#00f000" stroke-width="2.8" stroke-linecap="round"/><path d="M677.2 363H680.0" stroke="#003000" stroke-width="1.1" stroke-dasharray="0.9 1.5"/>
<path d="M716.9 363H719.1" stroke="#00f000" stroke-width="2.8" stroke-linecap="round"/><path d="M716.7 363H719.5" stroke="#003000" stroke-width="1.1" stroke-dasharray="0.9 1.5"/>
<path d="M757.9 363H760.1" stroke="#00f000" stroke-width="2.8" stroke-linecap="round"/><path d="M757.7 363H760.5" stroke="#003000" stroke-width="1.1" stroke-dasharray="0.9 1.5"/>
<path d="M390 365L394 360.5" stroke="#ddd" stroke-width="1" />
<path d="M416 365L420 360.5" stroke="#ddd" stroke-width="1" />
<path d="M443 365L447 360.5" stroke="#ddd" stroke-width="1" />
<path d="M470 365L474 360.5" stroke="#ddd" stroke-width="1" />
<path d="M497 365L501 360.5" stroke="#ddd" stroke-width="1" />
<path d="M527 365L531 360.5" stroke="#ddd" stroke-width="1" />
<path d="M359 370.1L767 370.1" stroke="#0000e6" stroke-width="1.2" />
<path d="M359 379.8L607.6 379.8" stroke="#0000e6" stroke-width="1.1" />
<path d="M359 383.67L607.6 383.67" stroke="#0000e6" stroke-width="1.1" />
<path d="M359 387.54L607.6 387.54" stroke="#0000e6" stroke-width="1.1" />
<path d="M359 391.41L607.6 391.41" stroke="#0000e6" stroke-width="1.1" />
<path d="M359 395.28L607.6 395.28" stroke="#0000e6" stroke-width="1.1" />
<path d="M359 399.15L607.6 399.15" stroke="#0000e6" stroke-width="1.1" />
<path d="M359 403.02L607.6 403.02" stroke="#0000e6" stroke-width="1.1" />
<path d="M359 406.89L607.6 406.89" stroke="#0000e6" stroke-width="1.1" />
<path d="M607.6 375.3L767 375.3" stroke="#0000e6" stroke-width="1.1" />
<path d="M607.6 380.2L767 380.2" stroke="#0000e6" stroke-width="1.1" />
<path d="M607.6 385.2L767 385.2" stroke="#0000e6" stroke-width="1.1" />
<path d="M607.6 389.9L767 389.9" stroke="#0000e6" stroke-width="1.1" />
<path d="M607.6 394.7L767 394.7" stroke="#0000e6" stroke-width="1.1" />
<path d="M607.6 399.6L767 399.6" stroke="#0000e6" stroke-width="1.1" />
<path d="M607.6 404.3L767 404.3" stroke="#0000e6" stroke-width="1.1" />
<path d="M371.6 370L371.6 411" stroke="#0000e6" stroke-width="1.2" />
<path d="M390 370L390 411" stroke="#0000e6" stroke-width="1.2" />
<path d="M405.6 370L405.6 411" stroke="#0000e6" stroke-width="1.2" />
<path d="M422 370L422 411" stroke="#0000e6" stroke-width="1.2" />
<path d="M438 370L438 411" stroke="#0000e6" stroke-width="1.2" />
<path d="M454 370L454 411" stroke="#0000e6" stroke-width="1.2" />
<path d="M470.4 370L470.4 411" stroke="#0000e6" stroke-width="1.2" />
<path d="M486.4 370L486.4 411" stroke="#0000e6" stroke-width="1.2" />
<path d="M505.6 370L505.6 411" stroke="#0000e6" stroke-width="1.2" />
<path d="M523.6 370L523.6 411" stroke="#0000e6" stroke-width="1.2" />
<path d="M536.6 370L536.6 411" stroke="#0000e6" stroke-width="1.2" />
<path d="M548.6 370L548.6 411" stroke="#0000e6" stroke-width="1.2" />
<path d="M563 370L563 411" stroke="#0000e6" stroke-width="1.2" />
<path d="M577.6 370L577.6 411" stroke="#0000e6" stroke-width="1.2" />
<path d="M589.8 370L589.8 411" stroke="#0000e6" stroke-width="1.2" />
<path d="M607.6 370L607.6 411" stroke="#0000e6" stroke-width="1.2" />
<path d="M619.3 370L619.3 411" stroke="#0000e6" stroke-width="1.2" />
<path d="M648.6 370L648.6 411" stroke="#0000e6" stroke-width="1.2" />
<path d="M729.2 370L729.2 411" stroke="#0000e6" stroke-width="1.2" />
<path d="M748 370L748 411" stroke="#0000e6" stroke-width="1.2" />
<path d="M363.4 376H368.6" stroke="#00f000" stroke-width="2.8" stroke-linecap="round"/><path d="M363.2 376H369" stroke="#003000" stroke-width="1.1" stroke-dasharray="0.9 1.5"/>
<path d="M376.4 374.2H385.6" stroke="#00f000" stroke-width="2.8" stroke-linecap="round"/><path d="M376.2 374.2H386" stroke="#003000" stroke-width="1.1" stroke-dasharray="0.9 1.5"/>
<path d="M376.4 377.4H385.6" stroke="#00f000" stroke-width="2.8" stroke-linecap="round"/><path d="M376.2 377.4H386" stroke="#003000" stroke-width="1.1" stroke-dasharray="0.9 1.5"/>
<path d="M392.4 375.5H402.6" stroke="#00f000" stroke-width="2.8" stroke-linecap="round"/><path d="M392.2 375.5H403" stroke="#003000" stroke-width="1.1" stroke-dasharray="0.9 1.5"/>
<path d="M392.4 378.2H402.6" stroke="#00f000" stroke-width="2.8" stroke-linecap="round"/><path d="M392.2 378.2H403" stroke="#003000" stroke-width="1.1" stroke-dasharray="0.9 1.5"/>
<path d="M401.4 371.8H409.6" stroke="#00f000" stroke-width="2.8" stroke-linecap="round"/><path d="M401.2 371.8H410" stroke="#003000" stroke-width="1.1" stroke-dasharray="0.9 1.5"/>
<path d="M410.4 375.5H418.6" stroke="#00f000" stroke-width="2.8" stroke-linecap="round"/><path d="M410.2 375.5H419" stroke="#003000" stroke-width="1.1" stroke-dasharray="0.9 1.5"/>
<path d="M412.4 378.2H416.6" stroke="#00f000" stroke-width="2.8" stroke-linecap="round"/><path d="M412.2 378.2H417" stroke="#003000" stroke-width="1.1" stroke-dasharray="0.9 1.5"/>
<path d="M425.4 375.5H435.6" stroke="#00f000" stroke-width="2.8" stroke-linecap="round"/><path d="M425.2 375.5H436" stroke="#003000" stroke-width="1.1" stroke-dasharray="0.9 1.5"/>
<path d="M426.4 378.2H434.6" stroke="#00f000" stroke-width="2.8" stroke-linecap="round"/><path d="M426.2 378.2H435" stroke="#003000" stroke-width="1.1" stroke-dasharray="0.9 1.5"/>
<path d="M431.4 371.8H443.6" stroke="#00f000" stroke-width="2.8" stroke-linecap="round"/><path d="M431.2 371.8H444" stroke="#003000" stroke-width="1.1" stroke-dasharray="0.9 1.5"/>
<path d="M442.4 375.5H450.6" stroke="#00f000" stroke-width="2.8" stroke-linecap="round"/><path d="M442.2 375.5H451" stroke="#003000" stroke-width="1.1" stroke-dasharray="0.9 1.5"/>
<path d="M444.4 378.2H448.6" stroke="#00f000" stroke-width="2.8" stroke-linecap="round"/><path d="M444.2 378.2H449" stroke="#003000" stroke-width="1.1" stroke-dasharray="0.9 1.5"/>
<path d="M457.4 375.5H466.6" stroke="#00f000" stroke-width="2.8" stroke-linecap="round"/><path d="M457.2 375.5H467" stroke="#003000" stroke-width="1.1" stroke-dasharray="0.9 1.5"/>
<path d="M458.4 378.2H465.6" stroke="#00f000" stroke-width="2.8" stroke-linecap="round"/><path d="M458.2 378.2H466" stroke="#003000" stroke-width="1.1" stroke-dasharray="0.9 1.5"/>
<path d="M466.4 371.8H472.6" stroke="#00f000" stroke-width="2.8" stroke-linecap="round"/><path d="M466.2 371.8H473" stroke="#003000" stroke-width="1.1" stroke-dasharray="0.9 1.5"/>
<path d="M473.4 376.4H484.1" stroke="#00f000" stroke-width="2.8" stroke-linecap="round"/><path d="M473.2 376.4H484.5" stroke="#003000" stroke-width="1.1" stroke-dasharray="0.9 1.5"/>
<path d="M493.4 371.8H512.6" stroke="#00f000" stroke-width="2.8" stroke-linecap="round"/><path d="M493.2 371.8H513" stroke="#003000" stroke-width="1.1" stroke-dasharray="0.9 1.5"/>
<path d="M492.4 376.8H499.1" stroke="#00f000" stroke-width="2.8" stroke-linecap="round"/><path d="M492.2 376.8H499.5" stroke="#003000" stroke-width="1.1" stroke-dasharray="0.9 1.5"/>
<path d="M511.4 375.5H517.6" stroke="#00f000" stroke-width="2.8" stroke-linecap="round"/><path d="M511.2 375.5H518" stroke="#003000" stroke-width="1.1" stroke-dasharray="0.9 1.5"/>
<path d="M512.4 378.2H516.6" stroke="#00f000" stroke-width="2.8" stroke-linecap="round"/><path d="M512.2 378.2H517" stroke="#003000" stroke-width="1.1" stroke-dasharray="0.9 1.5"/>
<path d="M501.4 372H513.1" stroke="#00f000" stroke-width="2.8" stroke-linecap="round"/><path d="M501.2 372H513.5" stroke="#003000" stroke-width="1.1" stroke-dasharray="0.9 1.5"/>
<path d="M511.4 376H516.6" stroke="#00f000" stroke-width="2.8" stroke-linecap="round"/><path d="M511.2 376H517" stroke="#003000" stroke-width="1.1" stroke-dasharray="0.9 1.5"/>
<path d="M512.4 378.3H515.6" stroke="#00f000" stroke-width="2.8" stroke-linecap="round"/><path d="M512.2 378.3H516" stroke="#003000" stroke-width="1.1" stroke-dasharray="0.9 1.5"/>
<path d="M527.4 374H534.1" stroke="#00f000" stroke-width="2.8" stroke-linecap="round"/><path d="M527.2 374H534.5" stroke="#003000" stroke-width="1.1" stroke-dasharray="0.9 1.5"/>
<path d="M526.9 377.6H534.6" stroke="#00f000" stroke-width="2.8" stroke-linecap="round"/><path d="M526.7 377.6H535" stroke="#003000" stroke-width="1.1" stroke-dasharray="0.9 1.5"/>
<path d="M539.4 375.8H546.1" stroke="#00f000" stroke-width="2.8" stroke-linecap="round"/><path d="M539.2 375.8H546.5" stroke="#003000" stroke-width="1.1" stroke-dasharray="0.9 1.5"/>
<path d="M554.4 377H557.1" stroke="#00f000" stroke-width="2.8" stroke-linecap="round"/><path d="M554.2 377H557.5" stroke="#003000" stroke-width="1.1" stroke-dasharray="0.9 1.5"/>
<path d="M559.4 372H568.6" stroke="#00f000" stroke-width="2.8" stroke-linecap="round"/><path d="M559.2 372H569" stroke="#003000" stroke-width="1.1" stroke-dasharray="0.9 1.5"/>
<path d="M566.4 377H575.1" stroke="#00f000" stroke-width="2.8" stroke-linecap="round"/><path d="M566.2 377H575.5" stroke="#003000" stroke-width="1.1" stroke-dasharray="0.9 1.5"/>
<path d="M580.4 375.6H587.1" stroke="#00f000" stroke-width="2.8" stroke-linecap="round"/><path d="M580.2 375.6H587.5" stroke="#003000" stroke-width="1.1" stroke-dasharray="0.9 1.5"/>
<path d="M593.4 374.2H604.6" stroke="#00f000" stroke-width="2.8" stroke-linecap="round"/><path d="M593.2 374.2H605" stroke="#003000" stroke-width="1.1" stroke-dasharray="0.9 1.5"/>
<path d="M595.4 377.4H602.6" stroke="#00f000" stroke-width="2.8" stroke-linecap="round"/><path d="M595.2 377.4H603" stroke="#003000" stroke-width="1.1" stroke-dasharray="0.9 1.5"/>
<path d="M363.5 382.4H367.5" stroke="#ffff00" stroke-width="2.4" stroke-dasharray="3.0 1.4" opacity="1"/>
<path d="M376 382.4H385" stroke="#ffff00" stroke-width="2.4" stroke-dasharray="1.8 0.6 1.8 0.5 1.8 1.4 3.6 0.6" opacity="1"/>
<path d="M394 382.4H402" stroke="#ffff00" stroke-width="2.4" stroke-dasharray="1.8 0.7 3.0 1.4 2.4 0.6" opacity="1"/>
<path d="M410.5 382.4H418.5" stroke="#ffff00" stroke-width="2.4" stroke-dasharray="3.0 0.7 1.8 0.7 3.0 0.7" opacity="1"/>
<path d="M428 382.4H432.5" stroke="#ffff00" stroke-width="2.4" stroke-dasharray="3.0 0.6 3.0 0.5" opacity="1"/>
<path d="M444 382.4H448" stroke="#ffff00" stroke-width="2.4" stroke-dasharray="2.4 0.7 1.8 0.7" opacity="1"/>
<path d="M457.5 382.4H468" stroke="#ffff00" stroke-width="2.4" stroke-dasharray="2.4 1.4 3.0 1.4 3.6 0.5" opacity="1"/>
<path d="M476.5 382.4H478.5" stroke="#ffff00" stroke-width="2.4" stroke-dasharray="2.4 0.6" opacity="1"/>
<path d="M495 382.4H497.5" stroke="#ffff00" stroke-width="2.4" stroke-dasharray="2.4 1.4" opacity="1"/>
<path d="M514 382.4H515.5" stroke="#ffff00" stroke-width="2.4" stroke-dasharray="1.2 0.5" opacity="1"/>
<path d="M528.5 382.4H532.5" stroke="#ffff00" stroke-width="2.4" stroke-dasharray="3.6 0.7" opacity="1"/>
<path d="M542 382.4H544.5" stroke="#ffff00" stroke-width="2.4" stroke-dasharray="1.8 0.7" opacity="1"/>
<path d="M553.5 382.4H559.5" stroke="#ffff00" stroke-width="2.4" stroke-dasharray="3.6 0.5 1.2 0.6 1.2 0.7" opacity="1"/>
<path d="M583 382.4H585" stroke="#ffff00" stroke-width="2.4" stroke-dasharray="2.4 0.5" opacity="1"/>
<path d="M597 382.4H599.5" stroke="#ffff00" stroke-width="2.4" stroke-dasharray="3.6 0.6" opacity="1"/>
<path d="M363.5 386.2H367.5" stroke="#ffff00" stroke-width="2.4" stroke-dasharray="1.8 0.6 3.0 0.7" opacity="1"/>
<path d="M376 386.2H385" stroke="#ffff00" stroke-width="2.4" stroke-dasharray="1.8 0.6 3.0 0.6 3.6 0.5" opacity="1"/>
<path d="M394 386.2H402" stroke="#ffff00" stroke-width="2.4" stroke-dasharray="3.6 0.7 1.8 1.4 1.8 0.5" opacity="1"/>
<path d="M410.5 386.2H418.5" stroke="#ffff00" stroke-width="2.4" stroke-dasharray="3.0 0.5 3.6 0.5 2.4 1.4" opacity="1"/>
<path d="M428 386.2H432.5" stroke="#ffff00" stroke-width="2.4" stroke-dasharray="1.8 0.6 3.0 1.4" opacity="1"/>
<path d="M444 386.2H448" stroke="#ffff00" stroke-width="2.4" stroke-dasharray="3.6 0.5" opacity="1"/>
<path d="M457.5 386.2H468" stroke="#ffff00" stroke-width="2.4" stroke-dasharray="3.0 1.4 1.8 1.4 1.8 1.4" opacity="1"/>
<path d="M476.5 386.2H478.5" stroke="#ffff00" stroke-width="2.4" stroke-dasharray="1.8 0.5" opacity="1"/>
<path d="M495 386.2H497.5" stroke="#ffff00" stroke-width="2.4" stroke-dasharray="1.8 0.7" opacity="1"/>
<path d="M514 386.2H515.5" stroke="#ffff00" stroke-width="2.4" stroke-dasharray="3.0 1.4" opacity="1"/>
<path d="M528.5 386.2H532.5" stroke="#ffff00" stroke-width="2.4" stroke-dasharray="2.4 1.4 2.4 1.4" opacity="1"/>
<path d="M542 386.2H544.5" stroke="#ffff00" stroke-width="2.4" stroke-dasharray="3.0 0.5" opacity="1"/>
<path d="M553.5 386.2H559.5" stroke="#ffff00" stroke-width="2.4" stroke-dasharray="1.8 0.7 1.2 0.5 3.6 0.5" opacity="1"/>
<path d="M583 386.2H585" stroke="#ffff00" stroke-width="2.4" stroke-dasharray="2.4 0.5" opacity="1"/>
<path d="M597 386.2H599.5" stroke="#ffff00" stroke-width="2.4" stroke-dasharray="3.6 1.4" opacity="1"/>
<path d="M610.4 407.6H616.6" stroke="#00f000" stroke-width="2.8" stroke-linecap="round"/><path d="M610.2 407.6H617" stroke="#003000" stroke-width="1.1" stroke-dasharray="0.9 1.5"/>
<path d="M630.4 407.6H637.6" stroke="#00f000" stroke-width="2.8" stroke-linecap="round"/><path d="M630.2 407.6H638" stroke="#003000" stroke-width="1.1" stroke-dasharray="0.9 1.5"/>
<path d="M678.4 407.6H700.6" stroke="#00f000" stroke-width="2.8" stroke-linecap="round"/><path d="M678.2 407.6H701" stroke="#003000" stroke-width="1.1" stroke-dasharray="0.9 1.5"/>
<path d="M734.0 407.6H744.2" stroke="#00f000" stroke-width="2.8" stroke-linecap="round"/><path d="M733.8 407.6H744.6" stroke="#003000" stroke-width="1.1" stroke-dasharray="0.9 1.5"/>
<path d="M753.0 407.6H761.6" stroke="#00f000" stroke-width="2.8" stroke-linecap="round"/><path d="M752.8 407.6H762" stroke="#003000" stroke-width="1.1" stroke-dasharray="0.9 1.5"/>
<path d="M336.8 364.6L343.8 374.2L329.8 374.2L336.8 364.6" stroke="#eaea00" stroke-width="1.05" fill="none" stroke-linejoin="round"/>
<ellipse cx="336.8" cy="370.8" rx="1.5" ry="1.9" stroke="#eaea00" stroke-width="0.9" fill="none"/>
<path d="M336.8 375.7L343.8 385.3L329.8 385.3L336.8 375.7" stroke="#eaea00" stroke-width="1.05" fill="none" stroke-linejoin="round"/>
<ellipse cx="336.8" cy="381.9" rx="1.5" ry="1.9" stroke="#eaea00" stroke-width="0.9" fill="none"/>
<path d="M336.8 386.8L343.8 396.4L329.8 396.4L336.8 386.8" stroke="#eaea00" stroke-width="1.05" fill="none" stroke-linejoin="round"/>
<ellipse cx="336.8" cy="393.0" rx="1.5" ry="1.9" stroke="#eaea00" stroke-width="0.9" fill="none"/>
<path d="M336.8 397.9L343.8 407.5L329.8 407.5L336.8 397.9" stroke="#eaea00" stroke-width="1.05" fill="none" stroke-linejoin="round"/>
<ellipse cx="336.8" cy="404.1" rx="1.5" ry="1.9" stroke="#eaea00" stroke-width="0.9" fill="none"/>
<path d="M336.8 409.0L343.8 418.6L329.8 418.6L336.8 409.0" stroke="#eaea00" stroke-width="1.05" fill="none" stroke-linejoin="round"/>
<ellipse cx="336.8" cy="415.2" rx="1.5" ry="1.9" stroke="#eaea00" stroke-width="0.9" fill="none"/>
<text x="366.5" y="83.6" font-family="Liberation Sans,sans-serif" font-size="6.5" fill="#ffff00">N</text>
<path d="M373.5 84.2L381 86.2L383.5 88.2L376 85.6L373.5 84.2" stroke="#ffff00" stroke-width="0.9" fill="none" />
<path d="M395.4 89.3H404.6" stroke="#ffff00" stroke-width="2.8" stroke-linecap="round"/><path d="M395.2 89.3H405" stroke="#303000" stroke-width="1.1" stroke-dasharray="0.9 1.5"/>
<path d="M395.4 92.5H425.6" stroke="#ffff00" stroke-width="2.8" stroke-linecap="round"/><path d="M395.2 92.5H426" stroke="#303000" stroke-width="1.1" stroke-dasharray="0.9 1.5"/>
<path d="M395.4 95.7H407.6" stroke="#ffff00" stroke-width="2.8" stroke-linecap="round"/><path d="M395.2 95.7H408" stroke="#303000" stroke-width="1.1" stroke-dasharray="0.9 1.5"/>
<path d="M395.4 98.9H405.6" stroke="#ffff00" stroke-width="2.8" stroke-linecap="round"/><path d="M395.2 98.9H406" stroke="#303000" stroke-width="1.1" stroke-dasharray="0.9 1.5"/>
<path d="M395.4 102.1H408.6" stroke="#ffff00" stroke-width="2.8" stroke-linecap="round"/><path d="M395.2 102.1H409" stroke="#303000" stroke-width="1.1" stroke-dasharray="0.9 1.5"/>
<path d="M395.4 105.3H412.6" stroke="#ffff00" stroke-width="2.8" stroke-linecap="round"/><path d="M395.2 105.3H413" stroke="#303000" stroke-width="1.1" stroke-dasharray="0.9 1.5"/>
<path d="M427.3 108.5L429.4 106.8L431.0 104.6L431.2 101.5L435.0 99.7L437.9 97.7L439.9 97.1L443.1 97.0L444.9 95.4L449.0 96.7L453.6 94.8L457.2 94.5L460.3 94.2L461.9 95.7L465.4 94.1L470.1 95.4L471.5 95.4L474.1 95.9L475.4 97.7L478.4 98.9L480.9 98.6L481.9 100.3L483.7 102.0L486.3 105.2L487.9 107.4L490.5 108.3L493.5 110.5L494.3 112.2L497.1 113.0L497.2 114.7L496.3 118.3L494.3 119.9L494.7 121.2L493.2 122.0L492.8 126.0L492.1 127.6L492.9 130.0L490.2 130.9L489.1 134.1L486.6 136.3L486.7 138.8L483.0 140.7L481.1 141.1L480.2 144.2L477.6 145.9L475.6 145.7L472.6 146.6L469.6 147.7L468.4 150.7L464.3 148.8L463.1 150.1L458.8 149.6L456.2 151.1L452.4 149.9L448.0 150.6L444.5 149.3L442.7 148.2L439.5 149.0L436.3 147.6L432.1 145.9L429.2 145.8L427.0 143.4L426.1 142.8L423.5 140.4L420.0 139.5L418.4 137.3L416.6 135.7L414.9 136.3L414.6 134.3L414.4 131.1L414.4 128.5L416.8 127.3L416.7 124.6L418.4 122.4L418.9 120.6L418.9 118.4L419.5 116.0L422.3 114.4L423.0 113.0L425.6 110.2L427.3 108.5" stroke="#cc0000" stroke-width="1.1" fill="none" />
<path d="M497.8 92L506 103.6L490 103.6L497.8 92" stroke="#d40000" stroke-width="1.1" fill="none" />
<ellipse cx="497.9" cy="99.6" rx="1.4" ry="2" stroke="#d40000" stroke-width="0.9" fill="none"/>
<text x="497.8" y="112.2" font-family="Liberation Sans,sans-serif" font-size="8.4" fill="#ffff20" textLength="17.6" lengthAdjust="spacing">Rev</text>
<path d="M432 103.5L664.5 207.4" stroke="#ffff00" stroke-width="0.95" />
<path d="M458 106.5L681.5 206.4" stroke="#ffff00" stroke-width="0.95" />
<path d="M463 125.6L646 207.4" stroke="#d00000" stroke-width="1.2" />
<path d="M458 106.5L458 126" stroke="#ffff00" stroke-width="0.95" />
<path d="M458 126L463 125.6" stroke="#ffff00" stroke-width="0.95" />
<path d="M463 117L463 125.6" stroke="#ffff00" stroke-width="0.95" />
<path d="M458 113L463 117" stroke="#ffff00" stroke-width="1" fill="none" />
<ellipse cx="432" cy="129.2" rx="7" ry="6" stroke="#ffff00" stroke-width="1" fill="none"/>
<path d="M425.4 130.5L438.6 130.5" stroke="#ffff00" stroke-width="0.95" />
<path d="M427 132.6H437" stroke="#ffff00" stroke-width="1.8" stroke-dasharray="3.0 0.6 1.2 0.6 3.0 0.6 2.4 0.5" opacity="0.8"/>
<path d="M430 127.6H434" stroke="#ffff00" stroke-width="1.8" stroke-dasharray="2.4 0.7 3.0 0.6" opacity="0.8"/>
<path d="M438.6 127L449.5 120" stroke="#ffff00" stroke-width="0.95" />
<ellipse cx="454.4" cy="130.4" rx="4.4" ry="3.6" stroke="#ffff00" stroke-width="1" fill="none"/>
<path d="M452.4 130.6H456.4" stroke="#ffff00" stroke-width="1.6" stroke-dasharray="2.4 1.4 2.4 1.4" opacity="0.8"/>
<path d="M458 128.6L461 126.6" stroke="#ffff00" stroke-width="0.95" />
<path d="M446 117L448 121.5L453 124L457 124.5" stroke="#c8c8c8" stroke-width="1.2" fill="none" />
<path d="M458.5 119.5L460.5 125L463.5 126.5" stroke="#e0e0e0" stroke-width="1.2" fill="none" />
<path d="M441.5 109.6H452.1" stroke="#ffff00" stroke-width="3" stroke-linecap="round"/><path d="M441.2 109.6H452.6" stroke="#303000" stroke-width="1.1" stroke-dasharray="0.9 1.5"/>
<path d="M441 107.6H447" stroke="#ffff00" stroke-width="1.6" stroke-dasharray="2.4 0.5 2.4 0.7" opacity="0.9"/>
<g transform="rotate(24 502 138)"><path d="M498 138H507" stroke="#ffff00" stroke-width="2.2" stroke-dasharray="2.4 1.4 3.0 0.7 3.6 0.7" opacity="0.9"/></g>
<g transform="rotate(24 650 200)"><path d="M647 199.4H654" stroke="#ffff00" stroke-width="2.2" stroke-dasharray="3.6 0.7 1.8 1.4" opacity="0.9"/><path d="M648 205H655" stroke="#ffff00" stroke-width="2.2" stroke-dasharray="1.2 0.7 1.8 0.7 2.4 0.6" opacity="0.9"/></g>
<path d="M582.5 160L578.5 176.6" stroke="#00e000" stroke-width="1.2" />
<path d="M530.1 170.9H548.1" stroke="#ffff00" stroke-width="3" stroke-linecap="round"/><path d="M529.8 170.9H548.6" stroke="#303000" stroke-width="1.1" stroke-dasharray="0.9 1.5"/>
<ellipse cx="525.6" cy="181" rx="5" ry="3.4" stroke="#ffff00" stroke-width="1" fill="none"/>
<path d="M523.4 181.2H527.8" stroke="#ffff00" stroke-width="1.6" stroke-dasharray="3.6 0.5 1.2 1.4" opacity="0.8"/>
<ellipse cx="525" cy="188" rx="4.6" ry="3.4" stroke="#c8c8c8" stroke-width="1" fill="none"/>
<path d="M524 188H526" stroke="#c8c8c8" stroke-width="1.6" stroke-dasharray="3.6 1.4" opacity="0.8"/>
<path d="M538 172.6L532.5 186" stroke="#ffff00" stroke-width="0.95" />
<path d="M531 183.5L551.5 176.6" stroke="#ffff00" stroke-width="0.95" />
<path d="M551.2 176.6L551.2 207.5" stroke="#ffff00" stroke-width="0.95" />
<path d="M542.6 182L542.6 207.5" stroke="#ffff00" stroke-width="0.95" />
<path d="M530 183L534.5 188L532 190" stroke="#e0e0e0" stroke-width="1.2" fill="none" />
<path d="M533.4 191L533.4 207.5" stroke="#d00000" stroke-width="1.2" />
<path d="M534 187.6L568 201.6" stroke="#ffff00" stroke-width="0.95" />
<path d="M544 186.4L552 186.4" stroke="#ffff00" stroke-width="0.95" />
<path d="M551.5 186.4H556" stroke="#ffff00" stroke-width="2.2" stroke-dasharray="3.6 0.5 3.0 0.7" opacity="0.9"/>
<path d="M567 201.6H581" stroke="#ffff00" stroke-width="2.4" stroke-dasharray="1.2 0.5 1.2 0.6 3.0 0.5 3.6 1.4 3.6 0.6" opacity="0.9"/>
<path d="M567 205H590" stroke="#ffff00" stroke-width="2.4" stroke-dasharray="3.6 0.5 1.8 0.5 3.0 0.6 1.2 0.6 1.2 1.4 1.2 0.5 2.4 0.6 2.4 0.7 2.4 0.6" opacity="0.9"/>
<path d="M576.9 189.9H592.9" stroke="#ffff00" stroke-width="3" stroke-linecap="round"/><path d="M576.6 189.9H593.4" stroke="#303000" stroke-width="1.1" stroke-dasharray="0.9 1.5"/>
<path d="M594.4 190L606 189.4L609.3 186.5L609 181.4L606.5 181" stroke="#ffff00" stroke-width="1" fill="none" />
<path d="M606 187.4L610 190.6L606.5 192" stroke="#c8c8c8" stroke-width="1.1" fill="none" />
<ellipse cx="598.5" cy="195.4" rx="4.6" ry="3.5" stroke="#c8c8c8" stroke-width="1" fill="none"/>
<path d="M596.6 195.4H600.4" stroke="#c8c8c8" stroke-width="1.6" stroke-dasharray="3.0 0.5 2.4 0.5" opacity="0.8"/>
<path d="M602.4 193.6L606.5 190.5" stroke="#ffff00" stroke-width="0.95" />
<path d="M533.4 242L533.4 302" stroke="#d00000" stroke-width="1.2" />
<path d="M533.4 302L534 304L536 304.6" stroke="#d00000" stroke-width="1.2" fill="none" />
<path d="M542.6 242L542.6 300.5" stroke="#ffff00" stroke-width="0.95" />
<path d="M550.6 242L550.6 297.5" stroke="#ffff00" stroke-width="0.95" />
<path d="M527 245H529.4" stroke="#ffff00" stroke-width="2.6" stroke-dasharray="3.0 0.5" opacity="0.9"/>
<path d="M467 288.2L531.5 247" stroke="#00c000" stroke-width="1.1" />
<rect x="461" y="275.4" width="6" height="29.8" fill="#00f000"/>
<path d="M464 277V304" stroke="#004000" stroke-width="2.4" stroke-dasharray="1 1.6 0.8 1.2 1.4 2 1 1.6" opacity="0.8"/>
<path d="M550.9 297.4L652 252.3" stroke="#d00000" stroke-width="1.2" />
<path d="M541.7 310.2L641 264.3" stroke="#ffff00" stroke-width="0.95" />
<path d="M533.2 321.5L689 249.4" stroke="#ffff00" stroke-width="0.95" />
<path d="M533.2 303.8L533.2 321.5" stroke="#ffff00" stroke-width="0.95" />
<path d="M541.7 297.4L541.7 310.2" stroke="#ffff00" stroke-width="0.95" />
<path d="M533.2 306L541.7 301.7" stroke="#ffff00" stroke-width="0.95" />
<path d="M533.2 313.8L541.7 310.2" stroke="#ffff00" stroke-width="0.95" />
<path d="M489.6 322L529 305.6" stroke="#ffff00" stroke-width="0.95" />
<path d="M489.6 329.6L533.2 307.6" stroke="#ffff00" stroke-width="0.95" />
<path d="M539.8 297.6H540.0" stroke="#ffff00" stroke-width="2.8" stroke-linecap="round"/><path d="M539.6 297.6H540.4" stroke="#303000" stroke-width="1.1" stroke-dasharray="0.9 1.5"/>
<path d="M535.6 310.4H539.6" stroke="#ffff00" stroke-width="2.4" stroke-dasharray="3.0 0.5 1.2 1.4" opacity="0.9"/>
<g transform="rotate(-24 499 317)"><path d="M490 316H508.5" stroke="#ffff00" stroke-width="2.5" stroke-dasharray="3.6 1.4 3.0 0.5 1.2 1.4 3.6 0.6 3.0 1.4" opacity="0.9"/></g>
<ellipse cx="523.2" cy="301.7" rx="4.4" ry="3.6" stroke="#c8c8c8" stroke-width="1" fill="none"/>
<ellipse cx="523.2" cy="301.7" rx="1" ry="1" stroke="#c8c8c8" stroke-width="1" fill="none"/>
<path d="M527.4 300.2L533 298.4" stroke="#e0e0e0" stroke-width="1.1" />
<rect x="520.8" y="305.2" width="3.6" height="3.6" fill="#ffff00"/>
<ellipse cx="486" cy="332" rx="4.4" ry="3.6" stroke="#c8c8c8" stroke-width="1" fill="none"/>
<ellipse cx="486" cy="332" rx="0.9" ry="0.9" stroke="#c8c8c8" stroke-width="1" fill="none"/>
<g transform="rotate(-25 576.8 281)"><path d="M574.3 281H579.3" stroke="#ffff00" stroke-width="2.4" stroke-dasharray="3.6 0.5 1.2 1.4" opacity="0.9"/></g>
<g transform="rotate(-25 587.4 277.2)"><path d="M584.9 277.2H589.9" stroke="#ffff00" stroke-width="2.4" stroke-dasharray="1.8 0.6 1.2 1.4" opacity="0.9"/></g>
<g transform="rotate(-25 589 287.2)"><path d="M586 287.2H592" stroke="#ffff00" stroke-width="2.4" stroke-dasharray="1.2 0.5 1.2 0.5 1.8 0.5 1.8 1.4" opacity="0.9"/></g>
<g transform="rotate(-25 589 294.7)"><path d="M586 294.7H592" stroke="#ffff00" stroke-width="2.4" stroke-dasharray="1.2 0.7 3.6 0.6" opacity="0.9"/></g>
<ellipse cx="628.2" cy="253.2" rx="4.2" ry="3.6" stroke="#c8c8c8" stroke-width="1" fill="none"/>
<ellipse cx="628.2" cy="253.2" rx="1" ry="1" stroke="#c8c8c8" stroke-width="1" fill="none"/>
<path d="M632.4 254.6L636.5 256.6L637.8 259.4" stroke="#e0e0e0" stroke-width="1" fill="none" />
<path d="M630 242.6L652 249.5" stroke="#ffff00" stroke-width="1" />
<path d="M641 242.6L658 248.6" stroke="#ffff00" stroke-width="1" />
<path d="M652 249.5L668 243" stroke="#ffff00" stroke-width="1" />
<path d="M645 252L658 246.5" stroke="#ffff00" stroke-width="1" />
<path d="M637 245L637 266.4" stroke="#ffff00" stroke-width="1" />
<path d="M637 266.4L644.9 262" stroke="#ffff00" stroke-width="1" />
<path d="M644.9 255.9L644.9 286.3" stroke="#ffff00" stroke-width="1" />
<path d="M661.9 250L661.9 267.5" stroke="#ffff00" stroke-width="1" />
<path d="M655 249L655 272" stroke="#ffff00" stroke-width="1" />
<path d="M658.3 272.9L658.3 291.7" stroke="#ffff00" stroke-width="1" />
<path d="M644.9 286.3L658.3 291.7" stroke="#ffff00" stroke-width="1" />
<path d="M644.9 286.3L656 279.6" stroke="#ffff00" stroke-width="1" />
<path d="M649 274L658.3 278.4" stroke="#ffff00" stroke-width="1" />
<path d="M641.3 267.5L620.7 285.4" stroke="#ffff00" stroke-width="1" />
<path d="M644.9 286.3L632 294" stroke="#ffff00" stroke-width="1" />
<path d="M658.3 291.7L650 297" stroke="#ffff00" stroke-width="1" />
<path d="M658.3 291.7L670.8 284.6" stroke="#ffff00" stroke-width="1" />
<path d="M670.8 282.7L670.8 301.5" stroke="#ffff00" stroke-width="1" />
<path d="M673 281.6L673 301.5" stroke="#ffff00" stroke-width="1" />
<path d="M661.9 276.5L670.8 282.7" stroke="#ffff00" stroke-width="1" />
<path d="M648 262L661 268" stroke="#ffff00" stroke-width="1" />
<path d="M647 268.5L657 273" stroke="#ffff00" stroke-width="1" />
<path d="M644.9 267L648 271.4L653 273" stroke="#d00000" stroke-width="1.2" fill="none" />
<path d="M653 273L657 274.4L660 279L663 276L666 279.6L672 283" stroke="#e0e0e0" stroke-width="1.3" fill="none" />
<path d="M653 250.6L664 245L674 242.6" stroke="#d8d8d8" stroke-width="1.1" fill="none" />
<path d="M641 262L646 260.6L650 257.6" stroke="#e0e0e0" stroke-width="1" fill="none" />
<path d="M633.8 245.6H638.2" stroke="#ffff00" stroke-width="2.3" stroke-dasharray="3.0 0.6 1.2 0.7" opacity="0.9"/>
<path d="M645.8 244.6H650.2" stroke="#ffff00" stroke-width="2.3" stroke-dasharray="1.8 0.5 2.4 1.4" opacity="0.9"/>
<path d="M656.8 251H661.2" stroke="#ffff00" stroke-width="2.3" stroke-dasharray="3.0 0.7 1.2 0.5" opacity="0.9"/>
<path d="M650.8 262.6H655.2" stroke="#ffff00" stroke-width="2.3" stroke-dasharray="1.2 0.5 1.2 0.5 3.0 0.7" opacity="0.9"/>
<path d="M653.4 267.4H657.8000000000001" stroke="#ffff00" stroke-width="2.3" stroke-dasharray="2.4 0.6 3.0 0.5" opacity="0.9"/>
<path d="M650.4 285H654.8000000000001" stroke="#ffff00" stroke-width="2.3" stroke-dasharray="2.4 0.7 3.6 1.4" opacity="0.9"/>
<path d="M662.8 292.5H667.2" stroke="#ffff00" stroke-width="2.3" stroke-dasharray="3.0 0.6 1.8 0.5" opacity="0.9"/>
<ellipse cx="639.5" cy="279.5" rx="4.5" ry="3.6" stroke="#ffff00" stroke-width="1" fill="none"/>
<ellipse cx="639.5" cy="279.5" rx="1" ry="1" stroke="#ffff00" stroke-width="1" fill="none"/>
<ellipse cx="667.2" cy="268.4" rx="4.2" ry="3.2" stroke="#ffff00" stroke-width="1" fill="none"/>
<path d="M665.6 268.4H668.8000000000001" stroke="#ffff00" stroke-width="1.5" stroke-dasharray="2.4 0.6 3.0 1.4" opacity="0.8"/>
<ellipse cx="675.3" cy="272" rx="4.2" ry="3.2" stroke="#ffff00" stroke-width="1" fill="none"/>
<path d="M673.6999999999999 272H676.9" stroke="#ffff00" stroke-width="1.5" stroke-dasharray="3.0 1.4" opacity="0.8"/>
<ellipse cx="683" cy="275.6" rx="4.2" ry="3.2" stroke="#ffff00" stroke-width="1" fill="none"/>
<path d="M681.4 275.6H684.6" stroke="#ffff00" stroke-width="1.5" stroke-dasharray="2.4 0.7 2.4 0.7" opacity="0.8"/>
<path d="M688 249.6L690.2 246.6L694.4 246.6L696.6 249.6L694.4 252.6L690.2 252.6L688 249.6" stroke="#ffff00" stroke-width="1" fill="none" />
<path d="M690.6 249.6H694" stroke="#ffff00" stroke-width="1.6" stroke-dasharray="1.2 0.7 3.6 0.5" opacity="0.8"/>
<path d="M696.6 249.2L713.8 250.4" stroke="#ffff00" stroke-width="0.95" />
<path d="M669 242.6L689 248" stroke="#ffff00" stroke-width="0.95" />
<ellipse cx="720.6" cy="250.5" rx="6.8" ry="5.6" stroke="#ffff00" stroke-width="1" fill="none"/>
<path d="M714.2 252.2L727 252.2" stroke="#ffff00" stroke-width="0.95" />
<path d="M716.6 249H724.6" stroke="#ffff00" stroke-width="2" stroke-dasharray="1.8 0.7 3.6 1.4 1.8 1.4" opacity="0.9"/>
<path d="M715.6 254.2H725.6" stroke="#ffff00" stroke-width="1.8" stroke-dasharray="3.0 1.4 3.6 0.6 3.0 0.7" opacity="0.8"/>
<path d="M713.9 259.1H717.2" stroke="#ffff00" stroke-width="2.8" stroke-linecap="round"/><path d="M713.7 259.1H717.6" stroke="#303000" stroke-width="1.1" stroke-dasharray="0.9 1.5"/>
<g transform="rotate(-26 675.7 252.7)"><path d="M666.3 252.7H685" stroke="#ffff00" stroke-width="2.5" stroke-dasharray="1.2 0.7 2.4 0.7 3.0 0.6 3.6 0.5 2.4 0.6 3.6 0.6" opacity="0.9"/></g>
<path d="M619 284.6H623" stroke="#ffff00" stroke-width="2.5" stroke-dasharray="2.4 1.4 2.4 0.5" opacity="0.9"/>
<path d="M619 288.4H632" stroke="#ffff00" stroke-width="2.5" stroke-dasharray="3.6 1.4 3.0 0.6 1.8 0.7 3.6 0.5" opacity="0.9"/>
<path d="M624 295.6H645" stroke="#ffff00" stroke-width="2.5" stroke-dasharray="3.0 1.4 1.8 0.7 3.6 0.5 3.0 1.4 3.6 0.5 3.6 0.7" opacity="0.9"/>
<path d="M639 299H654" stroke="#ffff00" stroke-width="2.5" stroke-dasharray="1.2 0.6 3.0 0.7 3.6 0.7 3.0 0.6 1.8 0.6" opacity="0.9"/>
<path d="M676 282H684" stroke="#ffff00" stroke-width="2.5" stroke-dasharray="1.8 0.5 1.8 0.7 2.4 0.7 3.0 0.6" opacity="0.9"/>
<path d="M677 285.6H685" stroke="#ffff00" stroke-width="2.5" stroke-dasharray="1.8 0.5 3.0 0.7 1.2 0.7 3.0 0.5" opacity="0.9"/>
<path d="M670 299.8H673.5" stroke="#ffff00" stroke-width="2.5" stroke-dasharray="1.8 0.7 3.6 0.5" opacity="0.9"/>
<path d="M667 305.6H669" stroke="#ffff00" stroke-width="2.5" stroke-dasharray="2.4 0.7" opacity="0.9"/>
<path d="M672 305.6H680" stroke="#ffff00" stroke-width="2.5" stroke-dasharray="3.6 0.5 1.2 0.5 1.8 1.4" opacity="0.9"/>
<path d="M666.6 309H683" stroke="#ffff00" stroke-width="2.5" stroke-dasharray="3.6 0.6 2.4 0.7 3.0 0.5 3.0 0.6 2.4 0.5" opacity="0.9"/>
<path d="M666.6 311.8H686" stroke="#ffff00" stroke-width="2.5" stroke-dasharray="2.4 0.6 1.8 1.4 1.2 0.5 1.2 0.5 3.6 0.7 3.0 1.4 1.2 1.4" opacity="0.9"/>
<rect x="364.2" y="183.2" width="116.8" height="84.4" fill="#222222" stroke="#8c8420" stroke-width="1.1"/>
<text x="389.8" y="192.6" font-family="Liberation Sans,sans-serif" font-size="5.2" fill="#b4a428" textLength="8">UP</text>
<text x="368.6" y="217" font-family="Liberation Sans,sans-serif" font-size="5.6" fill="#b4a428" textLength="16.4">WEST</text>
<text x="458.8" y="217" font-family="Liberation Sans,sans-serif" font-size="5.6" fill="#b4a428" textLength="14.6">EAST</text>
<text x="370.6" y="225" font-family="Liberation Sans,sans-serif" font-size="3.4" fill="#b4a428" textLength="10">PIPE</text>
<text x="370.6" y="228.4" font-family="Liberation Sans,sans-serif" font-size="3.4" fill="#b4a428" textLength="18">CUTTING</text>
<path d="M393.3 205.4H450.7A4.2 9.5 0 0 1 450.7 224.4H393.3" stroke="#2a7c1c" stroke-width="1" fill="none"/>
<ellipse cx="450.7" cy="219.6" rx="3.4" ry="4.8" stroke="#2a7c1c" stroke-width="1" fill="none"/>
<path d="M389 214.8L456 214.8" stroke="#7c7420" stroke-width="1" />
<path d="M393.3 205.4V224.4H407.8Z" fill="#8f8420" stroke="#b0a420" stroke-width="0.7"/>
<path d="M393.3 197L393.3 205" stroke="#00c8c8" stroke-width="1" />
<path d="M393.3 193.6L395.2 197.6H391.4Z" fill="#00c8c8"/>
<path d="M393.3 224.4L393.3 248.6" stroke="#00c8c8" stroke-width="1" />
<path d="M400.3 224.4L400.3 241.4" stroke="#00c8c8" stroke-width="1" />
<path d="M407.8 224.4L407.8 235" stroke="#00c8c8" stroke-width="1" />
<path d="M383.7 233.6L416.7 233.6" stroke="#00c8c8" stroke-width="1" />
<path d="M400.3 240.6L450.7 240.6" stroke="#00c8c8" stroke-width="1" />
<path d="M393.3 247L450.7 247" stroke="#00c8c8" stroke-width="1" />
<path d="M415.2 203.8L415.2 197L418.6 197" stroke="#00c8c8" stroke-width="1" fill="none" />
<path d="M415.2 205L416.4 202.6H414Z" fill="#00c8c8"/>
<path d="M385.6 221.4L388.4 218.4L388 220.4L392.4 215.6" stroke="#00c8c8" stroke-width="0.9" fill="none" />
<path d="M396 208.6L399.6 206.6" stroke="#00c8c8" stroke-width="0.9" fill="none" />
<circle cx="394.6" cy="233.6" r="0.9" fill="#00c8c8"/>
<circle cx="399" cy="233.6" r="0.9" fill="#00c8c8"/>
<circle cx="401.6" cy="233.6" r="0.9" fill="#00c8c8"/>
<circle cx="406.4" cy="233.6" r="0.9" fill="#00c8c8"/>
<circle cx="401.6" cy="240.6" r="0.9" fill="#00c8c8"/>
<circle cx="449.4" cy="240.6" r="0.9" fill="#00c8c8"/>
<circle cx="394.6" cy="247" r="0.9" fill="#00c8c8"/>
<circle cx="449.4" cy="247" r="0.9" fill="#00c8c8"/>
<rect x="419.2" y="195.2" width="6" height="3.4" rx="1.4" stroke="#d8d8c8" stroke-width="0.7" fill="none"/>
<path d="M427 197H429" stroke="#c8c8c8" stroke-width="1.4" stroke-dasharray="1.2 0.5 2.4 0.7" opacity="0.8"/>
<path d="M431 197H434" stroke="#c8c8c8" stroke-width="1.4" stroke-dasharray="3.6 0.6" opacity="0.8"/>
<path d="M381.6 205.6H385.6" stroke="#e0e0e0" stroke-width="1.6" stroke-dasharray="1.2 1.4 1.8 1.4" opacity="0.9"/>
<path d="M386 232H388" stroke="#e0e0e0" stroke-width="1.8" stroke-dasharray="1.8 0.7" opacity="0.9"/>
<path d="M413 232H415" stroke="#e0e0e0" stroke-width="1.8" stroke-dasharray="1.8 0.6" opacity="0.9"/>
<path d="M418 239H426" stroke="#e0e0e0" stroke-width="1.8" stroke-dasharray="1.8 0.5 2.4 0.7 1.2 0.5 1.2 0.7" opacity="0.9"/>
<path d="M416 245.6H424" stroke="#e0e0e0" stroke-width="1.8" stroke-dasharray="3.6 1.4 1.2 0.5 1.8 0.7" opacity="0.9"/>
<path d="M404 257H433.7" stroke="#20c020" stroke-width="2" stroke-dasharray="1.2 0.6 2.4 1.4 1.2 1.4 2.4 0.7 2.4 1.4 1.2 0.7 3.0 1.4 1.8 1.4 1.8 0.6 1.2 1.4 1.8 0.5" opacity="0.85"/>
<path d="M438 257H441" stroke="#e0e0e0" stroke-width="2" stroke-dasharray="1.8 0.6 1.2 0.7" opacity="0.9"/>
<path d="M444 257H446" stroke="#20c020" stroke-width="2" stroke-dasharray="1.8 1.4" opacity="0.8"/>
<path d="M417.3 262.4H426" stroke="#20c020" stroke-width="2" stroke-dasharray="1.2 1.4 1.2 0.5 3.0 0.7 2.4 0.6" opacity="0.85"/>
<path d="M427 262.4H429.6" stroke="#e0e0e0" stroke-width="2" stroke-dasharray="3.0 0.5" opacity="0.9"/>
<rect x="518" y="86" width="297" height="73.6" rx="7" fill="#5b9a52"/>
<rect x="489.9" y="207.2" width="297.3" height="35.4" rx="8" fill="#5b9a52"/>
<rect x="687" y="269.8" width="297.3" height="35.3" rx="8" fill="#5b9a52"/>
<circle cx="590.1" cy="100.4" r="2.3" fill="#fffffa"/>
<text x="609.4" y="106.4" font-family="Liberation Sans,sans-serif" font-weight="bold" font-size="18.4" fill="#fffffa" textLength="51.2" lengthAdjust="spacingAndGlyphs">Cloud</text>
<text x="671.2" y="106.4" font-family="Liberation Sans,sans-serif" font-weight="bold" font-size="18.4" fill="#fffffa" textLength="74.4" lengthAdjust="spacingAndGlyphs">marking</text>
<circle cx="562.9" cy="124.4" r="2.3" fill="#fffffa"/>
<text x="589.2" y="130.6" font-family="Liberation Sans,sans-serif" font-weight="bold" font-size="18.4" fill="#fffffa" textLength="74.6" lengthAdjust="spacingAndGlyphs">Revision</text>
<text x="674.4" y="130.6" font-family="Liberation Sans,sans-serif" font-weight="bold" font-size="18.4" fill="#fffffa" textLength="99.1" lengthAdjust="spacingAndGlyphs">annotation</text>
<circle cx="590.1" cy="148.2" r="2.3" fill="#fffffa"/>
<text x="609.4" y="154.5" font-family="Liberation Sans,sans-serif" font-weight="bold" font-size="18.4" fill="#fffffa" textLength="68.2" lengthAdjust="spacingAndGlyphs">Custom</text>
<text x="687.9" y="154.5" font-family="Liberation Sans,sans-serif" font-weight="bold" font-size="18.4" fill="#fffffa" textLength="57.7" lengthAdjust="spacingAndGlyphs">memo</text>
<circle cx="525.7" cy="227.2" r="2.3" fill="#fffffa"/>
<text x="546.5" y="232.8" font-family="Liberation Sans,sans-serif" font-weight="bold" font-size="18.4" fill="#fffffa" textLength="51.3" lengthAdjust="spacingAndGlyphs">Detail</text>
<text x="608.4" y="232.8" font-family="Liberation Sans,sans-serif" font-weight="bold" font-size="18.4" fill="#fffffa" textLength="73.7" lengthAdjust="spacingAndGlyphs">drawing</text>
<text x="691.7" y="232.8" font-family="Liberation Sans,sans-serif" font-weight="bold" font-size="18.4" fill="#fffffa" textLength="60.9" lengthAdjust="spacingAndGlyphs">library</text>
<circle cx="779.4" cy="289.2" r="2.3" fill="#fffffa"/>
<text x="798.5" y="295.2" font-family="Liberation Sans,sans-serif" font-weight="bold" font-size="18.4" fill="#fffffa" textLength="23.3" lengthAdjust="spacingAndGlyphs">3D</text>
<text x="831.4" y="295.2" font-family="Liberation Sans,sans-serif" font-weight="bold" font-size="18.4" fill="#fffffa" textLength="62.7" lengthAdjust="spacingAndGlyphs">Viewer</text>
<defs><linearGradient id="vg" x1="0" y1="0" x2="0.1" y2="1"><stop offset="0" stop-color="#6c9fd6"/><stop offset="0.25" stop-color="#8fb6de"/><stop offset="0.5" stop-color="#b3cee7"/><stop offset="0.75" stop-color="#d6e3ee"/><stop offset="1" stop-color="#f2f2f2"/></linearGradient></defs>
<rect x="767" y="310.3" width="217.2" height="150.3" fill="url(#vg)"/>
<path d="M836.7 346.4L955.3 399.2L806 461.5" stroke="#8490a6" stroke-opacity="0.36" stroke-width="6.6" stroke-linejoin="round" stroke-linecap="round" fill="none"/>
<path d="M880 365.6L895 372.3" stroke="#8090e0" stroke-opacity="0.3" stroke-width="6"/>
<path d="M843.5 434V447" stroke="#a0a4ae" stroke-opacity="0.45" stroke-width="3"/>
<path d="M843.5 417V431.5" stroke="#2a0303" stroke-width="3.8"/><path d="M842.6 417V431" stroke="#a00c0c" stroke-width="1.4"/>
<path d="M842.5 430L846 429.6L874 442L900 454.5L905.5 455.6L906 458.6L899 458L870 446L846 434.6Z" fill="#10106a"/>
<path d="M846 430.6L874 443L899 455.4" stroke="#2424e8" stroke-width="1.5" fill="none"/>
<path d="M845 432.4L858 438.4" stroke="#c01010" stroke-width="1.6"/>
<path d="M900.4 455.4L905 457.2" stroke="#f01818" stroke-width="3.6" stroke-linecap="round"/>
<path d="M790.8 364L790.8 436" stroke="#3c0505" stroke-width="8" stroke-linecap="butt" stroke-linejoin="round" fill="none"/><path d="M790.8 364L790.8 436" stroke="#d01414" stroke-width="3.6" stroke-linecap="butt" stroke-linejoin="round" fill="none" transform="translate(-1.6,0)"/>
<path d="M953 366.8L791.6 437.6" stroke="#2c0404" stroke-width="7.6" stroke-linecap="round" stroke-linejoin="round" fill="none"/><path d="M953 366.8L791.6 437.6" stroke="#c81212" stroke-width="2.6" stroke-linecap="round" stroke-linejoin="round" fill="none" transform="translate(-0.8,-2.0)"/>
<path d="M838.6 315.8L953 366.8" stroke="#900b0b" stroke-width="7.6" stroke-linecap="round" stroke-linejoin="round" fill="none"/><path d="M838.6 315.8L953 366.8" stroke="#e21a1a" stroke-width="4.7" stroke-linecap="round" stroke-linejoin="round" fill="none" transform="translate(0.4,-0.9)"/>
<path d="M879.8 334.2L897.5 342.1" stroke="#0c0c90" stroke-width="7.6"/><path d="M879.8 334.2L897.5 342.1" stroke="#2020e0" stroke-width="4.7" transform="translate(0.4,-0.9)"/>
<path d="M924 379.5L942.5 371.4" stroke="#08082c" stroke-width="7.6"/><path d="M924 379.5L942.5 371.4" stroke="#1c1cd8" stroke-width="2.7" transform="translate(-0.8,-2.0)"/>
<path d="M855 409.8L871.5 402.6" stroke="#08082c" stroke-width="7.6"/><path d="M855 409.8L871.5 402.6" stroke="#1c1cd8" stroke-width="2.7" transform="translate(-0.8,-2.0)"/>
<path d="M790.8 363L790.8 380.3" stroke="#0a0a58" stroke-width="8"/><path d="M790.8 363L790.8 380.3" stroke="#2020d8" stroke-width="3.6" transform="translate(-1.6,0)"/>
<ellipse cx="790.8" cy="362.6" rx="4" ry="1.9" fill="#c81414"/>
<path d="M786.8 436.5A4 2 0 0 0 794.8 436.5" fill="#a00c0c"/>
<path d="M921.5 376.8L921.5 384.40000000000003" stroke="#e81818" stroke-width="1.2" transform="rotate(-24 921.5 380.6)"/>
<path d="M873.5 397.9L873.5 405.5" stroke="#e81818" stroke-width="1.2" transform="rotate(-24 873.5 401.7)"/>
<path d="M898.5 338.8L898.5 346.2" stroke="#b8a8a8" stroke-width="1.2" transform="rotate(24 898.5 342.5)"/>
<path d="M917 347.1L917 354.5" stroke="#b8a8a8" stroke-width="1.2" transform="rotate(24 917 350.8)"/>
<path d="M937.6 356.2L937.6 363.59999999999997" stroke="#b8a8a8" stroke-width="1.2" transform="rotate(24 937.6 359.9)"/>
<path d="M944.5 366.8L944.5 374.2" stroke="#8c8484" stroke-width="1.2" transform="rotate(-24 944.5 370.5)"/>
<path d="M852.5 407.2L852.5 414.59999999999997" stroke="#8c8484" stroke-width="1.2" transform="rotate(-24 852.5 410.9)"/>
<path d="M834 415.3L834 422.7" stroke="#8c8484" stroke-width="1.2" transform="rotate(-24 834 419.0)"/>
<path d="M809 426.3L809 433.7" stroke="#8c8484" stroke-width="1.2" transform="rotate(-24 809 430.0)"/>
<path d="M786.8 380.6H794.8M786.8 428.4H794.8" stroke="#a8a0a0" stroke-width="1.2"/>
<rect x="887.6" y="311.4" width="8" height="6.6" fill="#d0dded" stroke="#e4edf6" stroke-width="0.6" opacity="0.85"/><path d="M890.0 314.6H893.2M891.6 313V316.4" stroke="#7c8ca4" stroke-width="0.9"/>
<rect x="897.2" y="311.4" width="8" height="6.6" fill="#d0dded" stroke="#e4edf6" stroke-width="0.6" opacity="0.85"/><path d="M899.6 314.6H902.8000000000001M901.2 313V316.4" stroke="#7c8ca4" stroke-width="0.9"/>
<rect x="906.9" y="311.4" width="8" height="6.6" fill="#d0dded" stroke="#e4edf6" stroke-width="0.6" opacity="0.85"/><path d="M909.3 314.6H912.5M910.9 313V316.4" stroke="#7c8ca4" stroke-width="0.9"/>
<rect x="916.6" y="311.4" width="8" height="6.6" fill="#d0dded" stroke="#e4edf6" stroke-width="0.6" opacity="0.85"/><path d="M919.0 314.6H922.2M920.6 313V316.4" stroke="#7c8ca4" stroke-width="0.9"/>
<rect x="926.2" y="311.4" width="8" height="6.6" fill="#d0dded" stroke="#e4edf6" stroke-width="0.6" opacity="0.85"/><path d="M928.6 314.6H931.8000000000001M930.2 313V316.4" stroke="#7c8ca4" stroke-width="0.9"/>
<rect x="935.9" y="311.4" width="8" height="6.6" fill="#d0dded" stroke="#e4edf6" stroke-width="0.6" opacity="0.85"/><path d="M938.3 314.6H941.5M939.9 313V316.4" stroke="#7c8ca4" stroke-width="0.9"/>
<rect x="945.5" y="311.4" width="8" height="6.6" fill="#d4e2f2" opacity="0.75"/><rect x="946.9" y="312.4" width="5.2" height="4.6" fill="#3f86d8"/>
<rect x="955.1" y="311.4" width="8" height="6.6" fill="#d4e2f2" opacity="0.75"/><rect x="956.5" y="312.4" width="5.2" height="4.6" fill="#3f86d8"/>
<rect x="964.8" y="311.4" width="8" height="6.6" fill="#d0dded" stroke="#e4edf6" stroke-width="0.6" opacity="0.85"/><path d="M967.1999999999999 314.6H970.4M968.8 313V316.4" stroke="#7c8ca4" stroke-width="0.9"/>
<rect x="974.5" y="311.4" width="8" height="6.6" fill="#d0dded" stroke="#e4edf6" stroke-width="0.6" opacity="0.85"/><path d="M976.9 314.6H980.1M978.5 313V316.4" stroke="#7c8ca4" stroke-width="0.9"/>
<path d="M774.4 449.6V442.6" stroke="#e88000" stroke-width="1.7"/><path d="M774.4 449.6L779.4 447.4M774.4 449.6L770.6 452M774.4 449.6L779 453" stroke="#333" stroke-width="1"/>
<ellipse cx="785.6" cy="410.7" rx="2.2" ry="1.9" fill="#fff" stroke="#111" stroke-width="1"/><path d="M788 409.4H792" stroke="#333" stroke-width="0.8"/>
</svg>
</body>
</html>
